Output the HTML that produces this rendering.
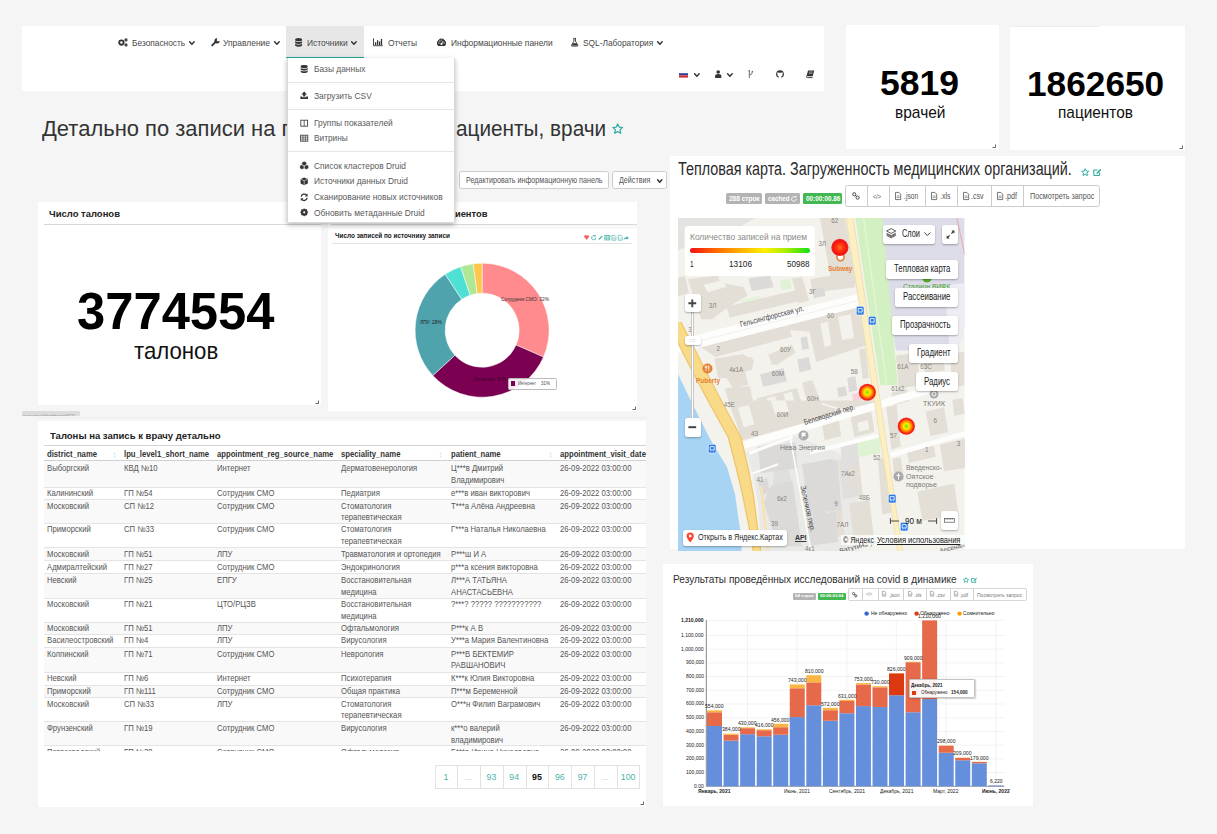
<!DOCTYPE html>
<html lang="ru"><head><meta charset="utf-8"><title>Детально по записи</title>
<style>
html,body{margin:0;padding:0}
body{width:1217px;height:834px;overflow:hidden;background:#f5f5f5;position:relative;font-family:"Liberation Sans",sans-serif;color:#333}
.t{position:absolute;white-space:nowrap;line-height:1;transform-origin:0 0;margin:0;padding:0;font-weight:400}
b.t,.t.b{font-weight:700}
.r{position:absolute;box-sizing:border-box;overflow:visible}
h1,h2,h3,p,nav,header,section,ul,li,table{margin:0;padding:0;font-weight:400;font-size:inherit}
.btn{border:1px solid #ccc;border-radius:2.5px}
.card{background:#fff}
.shadow{box-shadow:0 1px 2px rgba(0,0,0,.28)}
</style></head>
<body>
<header>
<div class="r hdr" style="left:22px;top:26px;width:802px;height:65px;background:#fff;"></div>
<div class="r" style="left:286px;top:26px;width:77.5px;height:31.5px;background:#e7e7e7;border-bottom:1.5px solid #1fa698;"></div>
<nav>
<svg class="r" style="left:118px;top:38px;" width="10" height="8.5" viewBox="0 0 10 8.5"><circle cx="3.4" cy="4.6" r="2.2" fill="none" stroke="#333" stroke-width="1.9"/><circle cx="8" cy="1.9" r="1" fill="none" stroke="#333" stroke-width="1.1"/><circle cx="8" cy="6.9" r="1" fill="none" stroke="#333" stroke-width="1.1"/></svg>
<span class="t" style="left:132px;top:37.5px;font-size:9.8px;color:#484848;transform:scaleX(0.851);">Безопасность</span>
<svg class="r" style="left:189.3px;top:41.3px;" width="5.8" height="4.5" viewBox="0 0 5.8 4.5"><path d="M0.6 0.8 L2.9 3.2 L5.2 0.8" fill="none" stroke="#333" stroke-width="1.45" stroke-linecap="round" stroke-linejoin="round"/></svg>
<svg class="r" style="left:210.5px;top:38px;" width="9" height="8.5" viewBox="0 0 9 8.5"><path d="M1.2 7.4 L5.2 3.4" stroke="#333" stroke-width="1.9" stroke-linecap="round"/><path d="M6.3 0.4 A2.6 2.6 0 1 0 8.6 2.8 L6.9 3.6 L5.6 2.4 Z" fill="#333"/></svg>
<span class="t" style="left:223px;top:37.5px;font-size:9.8px;color:#484848;transform:scaleX(0.8627);">Управление</span>
<svg class="r" style="left:273.6px;top:41.3px;" width="5.8" height="4.5" viewBox="0 0 5.8 4.5"><path d="M0.6 0.8 L2.9 3.2 L5.2 0.8" fill="none" stroke="#333" stroke-width="1.45" stroke-linecap="round" stroke-linejoin="round"/></svg>
<svg class="r" style="left:295px;top:37.7px;" width="7.4" height="9.2" viewBox="0 0 7.4 9.2"><g transform="scale(1,1.08)"><ellipse cx="3.6" cy="1.6" rx="3.5" ry="1.5" fill="#333"/><path d="M0.1 2.5 v1.5 a3.5 1.5 0 0 0 7 0 v-1.5 a3.5 1.3 0 0 1 -7 0z M0.1 4.9 v1.7 a3.5 1.5 0 0 0 7 0 v-1.7 a3.5 1.3 0 0 1 -7 0z" fill="#333"/></g></svg>
<span class="t" style="left:307px;top:37.5px;font-size:9.8px;color:#484848;transform:scaleX(0.8581);">Источники</span>
<svg class="r" style="left:351.2px;top:41.3px;" width="5.8" height="4.5" viewBox="0 0 5.8 4.5"><path d="M0.6 0.8 L2.9 3.2 L5.2 0.8" fill="none" stroke="#333" stroke-width="1.45" stroke-linecap="round" stroke-linejoin="round"/></svg>
<svg class="r" style="left:373px;top:38px;" width="10" height="8.5" viewBox="0 0 10 8.5"><path d="M0.5 0.3 V7.7 H9.7" fill="none" stroke="#333" stroke-width="0.9"/><path d="M2.6 7 V4.2 M4.6 7 V2.2 M6.6 7 V3.4 M8.5 7 V1" stroke="#333" stroke-width="1.3"/></svg>
<span class="t" style="left:388px;top:37.5px;font-size:9.8px;color:#484848;transform:scaleX(0.8561);">Отчеты</span>
<svg class="r" style="left:436.5px;top:38px;" width="9" height="8.5" viewBox="0 0 9 8.5"><path d="M1.1 8 A4.4 4.4 0 1 1 7.9 8 Z" fill="#333"/><circle cx="4.5" cy="5.9" r="1.05" fill="#fff"/><path d="M4.5 5.9 L6.2 3" stroke="#fff" stroke-width="0.8"/><circle cx="1.9" cy="4.9" r="0.6" fill="#fff"/><circle cx="2.9" cy="2.9" r="0.6" fill="#fff"/><circle cx="7.1" cy="4.9" r="0.6" fill="#fff"/><circle cx="4.5" cy="2.1" r="0.5" fill="#fff"/></svg>
<span class="t" style="left:450.7px;top:37.5px;font-size:9.8px;color:#484848;transform:scaleX(0.857);">Информационные панели</span>
<svg class="r" style="left:570.5px;top:38px;" width="7.4" height="8.5" viewBox="0 0 7.4 8.5"><path d="M2.5 0.4 h2.4 M2.9 0.5 v2.7 L0.5 7.3 q-0.3 0.8 0.6 0.8 h5.2 q0.9 0 0.6 -0.8 L4.5 3.2 v-2.7" fill="none" stroke="#333" stroke-width="0.9"/><path d="M2 5.2 h3.4 l1.2 2.4 h-5.8z" fill="#333"/></svg>
<span class="t" style="left:583px;top:37.5px;font-size:9.8px;color:#484848;transform:scaleX(0.8502);">SQL-Лаборатория</span>
<svg class="r" style="left:657.4px;top:41.3px;" width="5.8" height="4.5" viewBox="0 0 5.8 4.5"><path d="M0.6 0.8 L2.9 3.2 L5.2 0.8" fill="none" stroke="#333" stroke-width="1.45" stroke-linecap="round" stroke-linejoin="round"/></svg>
</nav>
<svg class="r" style="left:678.5px;top:71px;" width="9" height="6.6" viewBox="0 0 9 6.6"><rect width="9" height="2.2" fill="#fbfbfb" stroke="#e8e8e8" stroke-width="0.3"/><rect y="2.2" width="9" height="2.2" fill="#2a3f9d"/><rect y="4.4" width="9" height="2.2" fill="#d52b34"/></svg>
<svg class="r" style="left:693.7px;top:73px;" width="5.8" height="4.5" viewBox="0 0 5.8 4.5"><path d="M0.6 0.8 L2.9 3.2 L5.2 0.8" fill="none" stroke="#333" stroke-width="1.45" stroke-linecap="round" stroke-linejoin="round"/></svg>
<svg class="r" style="left:715px;top:70px;" width="6.4" height="8" viewBox="0 0 6.4 8"><circle cx="3.2" cy="2" r="1.8" fill="#333"/><path d="M0.1 7.9 V6 q0 -2 3.1 -2 q3.1 0 3.1 2 V7.9z" fill="#333"/></svg>
<svg class="r" style="left:727.4px;top:73px;" width="5.8" height="4.5" viewBox="0 0 5.8 4.5"><path d="M0.6 0.8 L2.9 3.2 L5.2 0.8" fill="none" stroke="#333" stroke-width="1.45" stroke-linecap="round" stroke-linejoin="round"/></svg>
<svg class="r" style="left:748.4px;top:70.2px;" width="6" height="8.2" viewBox="0 0 6 8.2"><path d="M1.3 0.3 V8 M1.3 5.2 Q4.4 5 4.4 1.6" fill="none" stroke="#6e6e6e" stroke-width="1"/><circle cx="1.3" cy="0.9" r="0.8" fill="#6e6e6e"/><circle cx="4.4" cy="1.5" r="0.8" fill="#6e6e6e"/></svg>
<svg class="r" style="left:776px;top:70px;" width="8" height="8.2" viewBox="0 0 8 8.2"><path d="M4 0.3 A3.8 3.8 0 0 0 2.7 7.7 V6.3 Q1.3 6.2 1.6 4.9 Q0.8 3.6 1.6 2.2 Q2.7 2.2 3 2.7 h2 Q5.3 2.2 6.4 2.2 Q7.2 3.6 6.4 4.9 Q6.7 6.2 5.3 6.3 V7.7 A3.8 3.8 0 0 0 4 0.3z" fill="#333"/></svg>
<svg class="r" style="left:806px;top:70px;" width="8.6" height="8" viewBox="0 0 8.6 8"><path d="M2 0.4 h6.2 l-1.5 5.8 h-6.2z" fill="#333"/><path d="M0.5 6.2 q-0.3 1.4 1 1.4 h5.2" fill="none" stroke="#333" stroke-width="0.9"/><path d="M3 2 h3.6 M2.7 3.3 h3.6" stroke="#fff" stroke-width="0.5"/></svg>
</header>
<h1 class="ttl">
<span class="t" style="left:42px;top:118.07px;font-size:22.6px;color:#333;transform:scaleX(0.972);">Детально по записи на приём к врачу: п</span>
<span class="t" style="left:455.8px;top:118.07px;font-size:22.6px;color:#333;transform:scaleX(0.9193);">ациенты, врачи</span>
</h1>
<svg class="r" style="left:611.5px;top:123.4px;" width="11.4" height="11.4" viewBox="0 0 11.4 11.4"><path d="M5.7 0.9 L7.15 4.1 L10.6 4.45 L8 6.8 L8.75 10.2 L5.7 8.45 L2.65 10.2 L3.4 6.8 L0.8 4.45 L4.25 4.1 Z" fill="none" stroke="#1fa698" stroke-width="1.1" stroke-linejoin="round"/></svg>
<div class="r btn" style="left:459px;top:171px;width:150.3px;height:18px;background:#fff;"></div>
<span class="t" style="left:466px;top:176.19px;font-size:8.4px;color:#555;transform:scaleX(0.8551);">Редактировать информационную панель</span>
<div class="r btn" style="left:612px;top:171px;width:54.5px;height:18px;background:#fff;"></div>
<span class="t" style="left:619px;top:176.19px;font-size:8.4px;color:#555;transform:scaleX(0.8559);">Действия</span>
<svg class="r" style="left:656.7px;top:178.6px;" width="5.4" height="4.6" viewBox="0 0 5.4 4.6"><path d="M0.6 0.8 L2.7 3.3 L4.8 0.8" fill="none" stroke="#333" stroke-width="1.45" stroke-linecap="round" stroke-linejoin="round"/></svg>
<div class="r" style="left:845.5px;top:25px;width:153px;height:124px;background:#fff;"></div>
<span class="t" style="left:880.3px;top:65.74px;font-size:34.8px;font-weight:700;color:#000;transform:scaleX(1.0204);">5819</span>
<span class="t" style="left:894.75px;top:104.85px;font-size:16.6px;color:#111;transform:scaleX(0.9339);">врачей</span>
<div class="r" style="left:1010px;top:26px;width:175px;height:123.8px;background:#fff;"></div>
<div class="r" style="left:1008.5px;top:26px;width:90px;height:1.2px;background:#ededed;"></div>
<span class="t" style="left:1027.4px;top:66.54px;font-size:34.8px;font-weight:700;color:#000;transform:scaleX(1.0127);">1862650</span>
<span class="t" style="left:1057.7px;top:104.85px;font-size:16.6px;color:#111;transform:scaleX(0.9274);">пациентов</span>
<svg class="r" style="left:992px;top:143.5px;" width="4" height="4" viewBox="0 0 4 4"><path d="M3.5 0.5 V3.5 H0.5" fill="none" stroke="#555" stroke-width="0.9"/></svg>
<svg class="r" style="left:1179px;top:144.5px;" width="4" height="4" viewBox="0 0 4 4"><path d="M3.5 0.5 V3.5 H0.5" fill="none" stroke="#555" stroke-width="0.9"/></svg>
<section>
<div class="r" style="left:38px;top:201.6px;width:282.7px;height:203px;background:#fff;"></div>
<span class="t" style="left:49px;top:209.3px;font-size:9.8px;font-weight:700;color:#222;transform:scaleX(0.9669);">Число талонов</span>
<div class="r" style="left:43.5px;top:224.2px;width:277.2px;height:1.2px;background:#d8d8d8;"></div>
<span class="t" style="left:76.95px;top:284.98px;font-size:52px;font-weight:700;color:#000;transform:scaleX(0.9756);">3774554</span>
<span class="t" style="left:133.85px;top:340.16px;font-size:23.2px;color:#111;transform:scaleX(0.9578);">талонов</span>
<svg class="r" style="left:315px;top:399.5px;" width="4" height="4" viewBox="0 0 4 4"><path d="M3.5 0.5 V3.5 H0.5" fill="none" stroke="#555" stroke-width="0.9"/></svg>
</section>
<div class="r" style="left:22px;top:410.6px;width:58.3px;height:5.5px;background:#dedcda;overflow:hidden;border-radius:0 1.5px 0 0">
<span class="t" style="left:1px;top:3.56px;font-size:5.6px;color:#909090;transform:scaleX(0.8837);">superset/dashboard/12/</span>
</div>
<div class="r" style="left:37.5px;top:417.2px;width:608.7px;height:1.4px;background:#f0f0f0;"></div>
<section>
<div class="r" style="left:327.5px;top:201.6px;width:309.8px;height:209.4px;background:#fff;"></div>
<span class="t" style="left:351.57px;top:209.3px;font-size:9.8px;font-weight:700;color:#222;transform:scaleX(0.9538);">Источники записи пациентов</span>
<div class="r" style="left:331px;top:224.2px;width:306.3px;height:1.2px;background:#d8d8d8;"></div>
<div class="r" style="left:327.5px;top:225.4px;width:309.8px;height:3.2px;background:#f8f8f8;"></div>
<span class="t" style="left:335px;top:232.37px;font-size:7.6px;font-weight:700;color:#222;transform:scaleX(0.8436);">Число записей по источнику записи</span>
<div class="r" style="left:332px;top:242.6px;width:300px;height:0.9px;background:#e2e2e2;"></div>
<svg class="r" style="left:582px;top:234.6px;" width="48.6" height="5.6" viewBox="0 0 50.5 6.2"><path d="M0.3 1.6 L1.6 0.3 H5.2 L6.5 1.6 L3.4 5.6 Z" fill="#f4656a"/><path d="M13.6 3 A2.3 2.3 0 1 1 12.6 1.1" fill="none" stroke="#3fb0a4" stroke-width="0.9"/><path d="M11.9 0 L14 0.4 L12.7 2.1z" fill="#3fb0a4"/><path d="M16.6 5.4 L17 4 L20.3 0.7 L21.3 1.7 L18 5 Z" fill="#3fb0a4"/><rect x="23.6" y="0.5" width="5.6" height="5" fill="none" stroke="#3fb0a4" stroke-width="0.8"/><path d="M23.6 2.2 h5.6 M23.6 3.8 h5.6 M25.5 0.5 v5 M27.4 0.5 v5" stroke="#3fb0a4" stroke-width="0.5"/><path d="M31.5 0.4 h3 l1.4 1.4 v4 h-4.4z" fill="none" stroke="#3fb0a4" stroke-width="0.7"/><path d="M32.4 3 h2.4 M32.4 4.3 h2.4" stroke="#3fb0a4" stroke-width="0.5"/><path d="M38.5 0.4 h3 l1.4 1.4 v4 h-4.4z" fill="none" stroke="#3fb0a4" stroke-width="0.7"/><path d="M39.4 3.6 h2.4" stroke="#3fb0a4" stroke-width="0.5"/><path d="M44.5 5.6 Q44.6 2.6 47.6 2.6 V1 L50.2 3.2 L47.6 5.4 V3.9 Q45.6 3.8 44.5 5.6z" fill="#3fb0a4"/></svg>
<svg class="r" style="left:400px;top:250px;" width="170" height="160" viewBox="0 0 170 160"><path d="M82.1 13.2 A67 67 0 0 1 143.5 107.02 L116.01 95.01 A37 37 0 0 0 82.1 43.2 Z" fill="#ff8b8e" stroke="#fff" stroke-width="0.5"/><path d="M143.5 107.02 A67 67 0 0 1 32.78 125.55 L54.86 105.24 A37 37 0 0 0 116.01 95.01 Z" fill="#7b0051" stroke="#fff" stroke-width="0.5"/><path d="M32.78 125.55 A67 67 0 0 1 45.22 24.27 L61.73 49.31 A37 37 0 0 0 54.86 105.24 Z" fill="#4ea3ad" stroke="#fff" stroke-width="0.5"/><path d="M45.22 24.27 A67 67 0 0 1 60.62 16.74 L70.24 45.15 A37 37 0 0 0 61.73 49.31 Z" fill="#4fe0d5" stroke="#fff" stroke-width="0.5"/><path d="M60.62 16.74 A67 67 0 0 1 73.24 13.79 L77.21 43.53 A37 37 0 0 0 70.24 45.15 Z" fill="#aee896" stroke="#fff" stroke-width="0.5"/><path d="M73.24 13.79 A67 67 0 0 1 82.1 13.2 L82.1 43.2 A37 37 0 0 0 77.21 43.53 Z" fill="#fdc64c" stroke="#fff" stroke-width="0.5"/></svg>
<span class="t" style="left:501px;top:297.4px;font-size:5.2px;color:#333;transform:scaleX(0.9217);">Сотрудник СМО: 32%</span>
<span class="t" style="left:420px;top:320.1px;font-size:5.2px;color:#222;transform:scaleX(0.9181);">ЛПУ: 28%</span>
<span class="t" style="left:473.7px;top:376.6px;font-size:5.2px;color:#3a0028;transform:scaleX(0.8976);">Интернет: 31%</span>
<div class="r" style="left:507.5px;top:377.5px;width:49.7px;height:12.2px;background:rgba(255,255,255,.92);border:0.8px solid #bbb;border-radius:1.5px;"></div>
<div class="r" style="left:510.8px;top:381.2px;width:4.4px;height:4.4px;background:#7b0051;"></div>
<span class="t" style="left:518px;top:381.84px;font-size:4.8px;color:#555;transform:scaleX(0.8594);">Интернет</span>
<span class="t" style="left:541px;top:381.84px;font-size:4.8px;color:#444;transform:scaleX(0.9368);">31%</span>
<svg class="r" style="left:631.5px;top:405.5px;" width="4" height="4" viewBox="0 0 4 4"><path d="M3.5 0.5 V3.5 H0.5" fill="none" stroke="#555" stroke-width="0.9"/></svg>
</section>
<section>
<div class="r" style="left:37.5px;top:421px;width:608.7px;height:385.5px;background:#fff;"></div>
<span class="t" style="left:50px;top:430.5px;font-size:9.8px;font-weight:700;color:#222;transform:scaleX(0.9723);">Талоны на запись к врачу детально</span>
<div class="r" style="left:44px;top:444.6px;width:602.2px;height:1.1px;background:#d4d4d4;"></div>
<div class="r" style="left:0;top:0;width:646.2px;height:751px;overflow:hidden">
<span class="t" style="left:47px;top:450px;font-size:8.5px;font-weight:700;color:#333;transform:scaleX(0.905);">district_name</span>
<span class="t" style="left:123.8px;top:450px;font-size:8.5px;font-weight:700;color:#333;transform:scaleX(0.905);">lpu_level1_short_name</span>
<span class="t" style="left:216.5px;top:450px;font-size:8.5px;font-weight:700;color:#333;transform:scaleX(0.905);">appointment_reg_source_name</span>
<span class="t" style="left:340.8px;top:450px;font-size:8.5px;font-weight:700;color:#333;transform:scaleX(0.905);">speciality_name</span>
<span class="t" style="left:451.3px;top:450px;font-size:8.5px;font-weight:700;color:#333;transform:scaleX(0.905);">patient_name</span>
<span class="t" style="left:560px;top:450px;font-size:8.5px;font-weight:700;color:#333;transform:scaleX(0.905);">appointment_visit_date</span>
<svg class="r" style="left:112.5px;top:452.2px;" width="3" height="6" viewBox="0 0 3 6"><path d="M1.5 0.3 L2.7 2.2 H0.3Z M1.5 5.7 L2.7 3.8 H0.3Z" fill="#ddd"/></svg>
<svg class="r" style="left:439px;top:452.2px;" width="3" height="6" viewBox="0 0 3 6"><path d="M1.5 0.3 L2.7 2.2 H0.3Z M1.5 5.7 L2.7 3.8 H0.3Z" fill="#ddd"/></svg>
<svg class="r" style="left:548.8px;top:452.2px;" width="3" height="6" viewBox="0 0 3 6"><path d="M1.5 0.3 L2.7 2.2 H0.3Z M1.5 5.7 L2.7 3.8 H0.3Z" fill="#ddd"/></svg>
<div class="r" style="left:44px;top:460.2px;width:602.2px;height:1px;background:#d0d0d0;"></div>
<div class="r" style="left:44px;top:461.2px;width:602.2px;height:25.8px;background:#f9f9f9;"></div>
<span class="t" style="left:47px;top:464.1px;font-size:8.5px;color:#555;transform:scaleX(0.905);">Выборгский</span>
<span class="t" style="left:123.8px;top:464.1px;font-size:8.5px;color:#555;transform:scaleX(0.905);">КВД №10</span>
<span class="t" style="left:216.5px;top:464.1px;font-size:8.5px;color:#555;transform:scaleX(0.905);">Интернет</span>
<span class="t" style="left:340.8px;top:464.1px;font-size:8.5px;color:#555;transform:scaleX(0.905);">Дерматовенерология</span>
<span class="t" style="left:451.3px;top:464.1px;font-size:8.5px;color:#555;transform:scaleX(0.905);">Ц***в Дмитрий</span>
<span class="t" style="left:451.3px;top:475.85px;font-size:8.5px;color:#555;transform:scaleX(0.905);">Владимирович</span>
<span class="t" style="left:560px;top:464.1px;font-size:8.5px;color:#555;transform:scaleX(0.905);">26-09-2022 03:00:00</span>
<div class="r" style="left:44px;top:486.5px;width:602.2px;height:1px;background:#e4e4e4;"></div>
<span class="t" style="left:47px;top:488.8px;font-size:8.5px;color:#555;transform:scaleX(0.905);">Калининский</span>
<span class="t" style="left:123.8px;top:488.8px;font-size:8.5px;color:#555;transform:scaleX(0.905);">ГП №54</span>
<span class="t" style="left:216.5px;top:488.8px;font-size:8.5px;color:#555;transform:scaleX(0.905);">Сотрудник СМО</span>
<span class="t" style="left:340.8px;top:488.8px;font-size:8.5px;color:#555;transform:scaleX(0.905);">Педиатрия</span>
<span class="t" style="left:451.3px;top:488.8px;font-size:8.5px;color:#555;transform:scaleX(0.905);">е***в иван викторович</span>
<span class="t" style="left:560px;top:488.8px;font-size:8.5px;color:#555;transform:scaleX(0.905);">26-09-2022 03:00:00</span>
<div class="r" style="left:44px;top:499px;width:602.2px;height:1px;background:#e4e4e4;"></div>
<div class="r" style="left:44px;top:500px;width:602.2px;height:23.8px;background:#f9f9f9;"></div>
<span class="t" style="left:47px;top:501.6px;font-size:8.5px;color:#555;transform:scaleX(0.905);">Московский</span>
<span class="t" style="left:123.8px;top:501.6px;font-size:8.5px;color:#555;transform:scaleX(0.905);">СП №12</span>
<span class="t" style="left:216.5px;top:501.6px;font-size:8.5px;color:#555;transform:scaleX(0.905);">Сотрудник СМО</span>
<span class="t" style="left:340.8px;top:501.6px;font-size:8.5px;color:#555;transform:scaleX(0.905);">Стоматология</span>
<span class="t" style="left:340.8px;top:513.35px;font-size:8.5px;color:#555;transform:scaleX(0.905);">терапевтическая</span>
<span class="t" style="left:451.3px;top:501.6px;font-size:8.5px;color:#555;transform:scaleX(0.905);">Т***а Алёна Андреевна</span>
<span class="t" style="left:560px;top:501.6px;font-size:8.5px;color:#555;transform:scaleX(0.905);">26-09-2022 03:00:00</span>
<div class="r" style="left:44px;top:523.3px;width:602.2px;height:1px;background:#e4e4e4;"></div>
<span class="t" style="left:47px;top:525.3px;font-size:8.5px;color:#555;transform:scaleX(0.905);">Приморский</span>
<span class="t" style="left:123.8px;top:525.3px;font-size:8.5px;color:#555;transform:scaleX(0.905);">СП №33</span>
<span class="t" style="left:216.5px;top:525.3px;font-size:8.5px;color:#555;transform:scaleX(0.905);">Сотрудник СМО</span>
<span class="t" style="left:340.8px;top:525.3px;font-size:8.5px;color:#555;transform:scaleX(0.905);">Стоматология</span>
<span class="t" style="left:340.8px;top:537.05px;font-size:8.5px;color:#555;transform:scaleX(0.905);">терапевтическая</span>
<span class="t" style="left:451.3px;top:525.3px;font-size:8.5px;color:#555;transform:scaleX(0.905);">Г***а Наталья Николаевна</span>
<span class="t" style="left:560px;top:525.3px;font-size:8.5px;color:#555;transform:scaleX(0.905);">26-09-2022 03:00:00</span>
<div class="r" style="left:44px;top:547px;width:602.2px;height:1px;background:#e4e4e4;"></div>
<div class="r" style="left:44px;top:548px;width:602.2px;height:12.5px;background:#f9f9f9;"></div>
<span class="t" style="left:47px;top:549.6px;font-size:8.5px;color:#555;transform:scaleX(0.905);">Московский</span>
<span class="t" style="left:123.8px;top:549.6px;font-size:8.5px;color:#555;transform:scaleX(0.905);">ГП №51</span>
<span class="t" style="left:216.5px;top:549.6px;font-size:8.5px;color:#555;transform:scaleX(0.905);">ЛПУ</span>
<span class="t" style="left:340.8px;top:549.6px;font-size:8.5px;color:#555;transform:scaleX(0.905);">Травматология и ортопедия</span>
<span class="t" style="left:451.3px;top:549.6px;font-size:8.5px;color:#555;transform:scaleX(0.905);">Р***ш И А</span>
<span class="t" style="left:560px;top:549.6px;font-size:8.5px;color:#555;transform:scaleX(0.905);">26-09-2022 03:00:00</span>
<div class="r" style="left:44px;top:560px;width:602.2px;height:1px;background:#e4e4e4;"></div>
<span class="t" style="left:47px;top:562.8px;font-size:8.5px;color:#555;transform:scaleX(0.905);">Адмиралтейский</span>
<span class="t" style="left:123.8px;top:562.8px;font-size:8.5px;color:#555;transform:scaleX(0.905);">ГП №27</span>
<span class="t" style="left:216.5px;top:562.8px;font-size:8.5px;color:#555;transform:scaleX(0.905);">Сотрудник СМО</span>
<span class="t" style="left:340.8px;top:562.8px;font-size:8.5px;color:#555;transform:scaleX(0.905);">Эндокринология</span>
<span class="t" style="left:451.3px;top:562.8px;font-size:8.5px;color:#555;transform:scaleX(0.905);">р***а ксения викторовна</span>
<span class="t" style="left:560px;top:562.8px;font-size:8.5px;color:#555;transform:scaleX(0.905);">26-09-2022 03:00:00</span>
<div class="r" style="left:44px;top:573.3px;width:602.2px;height:1px;background:#e4e4e4;"></div>
<div class="r" style="left:44px;top:574.3px;width:602.2px;height:23.7px;background:#f9f9f9;"></div>
<span class="t" style="left:47px;top:575.8px;font-size:8.5px;color:#555;transform:scaleX(0.905);">Невский</span>
<span class="t" style="left:123.8px;top:575.8px;font-size:8.5px;color:#555;transform:scaleX(0.905);">ГП №25</span>
<span class="t" style="left:216.5px;top:575.8px;font-size:8.5px;color:#555;transform:scaleX(0.905);">ЕПГУ</span>
<span class="t" style="left:340.8px;top:575.8px;font-size:8.5px;color:#555;transform:scaleX(0.905);">Восстановительная</span>
<span class="t" style="left:340.8px;top:587.55px;font-size:8.5px;color:#555;transform:scaleX(0.905);">медицина</span>
<span class="t" style="left:451.3px;top:575.8px;font-size:8.5px;color:#555;transform:scaleX(0.905);">Л***А ТАТЬЯНА</span>
<span class="t" style="left:451.3px;top:587.55px;font-size:8.5px;color:#555;transform:scaleX(0.905);">АНАСТАСЬЕВНА</span>
<span class="t" style="left:560px;top:575.8px;font-size:8.5px;color:#555;transform:scaleX(0.905);">26-09-2022 03:00:00</span>
<div class="r" style="left:44px;top:597.5px;width:602.2px;height:1px;background:#e4e4e4;"></div>
<span class="t" style="left:47px;top:600.1px;font-size:8.5px;color:#555;transform:scaleX(0.905);">Московский</span>
<span class="t" style="left:123.8px;top:600.1px;font-size:8.5px;color:#555;transform:scaleX(0.905);">ГП №21</span>
<span class="t" style="left:216.5px;top:600.1px;font-size:8.5px;color:#555;transform:scaleX(0.905);">ЦТО/РЦЗВ</span>
<span class="t" style="left:340.8px;top:600.1px;font-size:8.5px;color:#555;transform:scaleX(0.905);">Восстановительная</span>
<span class="t" style="left:340.8px;top:611.85px;font-size:8.5px;color:#555;transform:scaleX(0.905);">медицина</span>
<span class="t" style="left:451.3px;top:600.1px;font-size:8.5px;color:#555;transform:scaleX(0.905);">?***? ????? ???????????</span>
<span class="t" style="left:560px;top:600.1px;font-size:8.5px;color:#555;transform:scaleX(0.905);">26-09-2022 03:00:00</span>
<div class="r" style="left:44px;top:622px;width:602.2px;height:1px;background:#e4e4e4;"></div>
<div class="r" style="left:44px;top:623px;width:602.2px;height:11.5px;background:#f9f9f9;"></div>
<span class="t" style="left:47px;top:623.8px;font-size:8.5px;color:#555;transform:scaleX(0.905);">Московский</span>
<span class="t" style="left:123.8px;top:623.8px;font-size:8.5px;color:#555;transform:scaleX(0.905);">ГП №51</span>
<span class="t" style="left:216.5px;top:623.8px;font-size:8.5px;color:#555;transform:scaleX(0.905);">ЛПУ</span>
<span class="t" style="left:340.8px;top:623.8px;font-size:8.5px;color:#555;transform:scaleX(0.905);">Офтальмология</span>
<span class="t" style="left:451.3px;top:623.8px;font-size:8.5px;color:#555;transform:scaleX(0.905);">Р***к А В</span>
<span class="t" style="left:560px;top:623.8px;font-size:8.5px;color:#555;transform:scaleX(0.905);">26-09-2022 03:00:00</span>
<div class="r" style="left:44px;top:634px;width:602.2px;height:1px;background:#e4e4e4;"></div>
<span class="t" style="left:47px;top:636.3px;font-size:8.5px;color:#555;transform:scaleX(0.905);">Василеостровский</span>
<span class="t" style="left:123.8px;top:636.3px;font-size:8.5px;color:#555;transform:scaleX(0.905);">ГП №4</span>
<span class="t" style="left:216.5px;top:636.3px;font-size:8.5px;color:#555;transform:scaleX(0.905);">ЛПУ</span>
<span class="t" style="left:340.8px;top:636.3px;font-size:8.5px;color:#555;transform:scaleX(0.905);">Вирусология</span>
<span class="t" style="left:451.3px;top:636.3px;font-size:8.5px;color:#555;transform:scaleX(0.905);">У***а Мария Валентиновна</span>
<span class="t" style="left:560px;top:636.3px;font-size:8.5px;color:#555;transform:scaleX(0.905);">26-09-2022 03:00:00</span>
<div class="r" style="left:44px;top:647px;width:602.2px;height:1px;background:#e4e4e4;"></div>
<div class="r" style="left:44px;top:648px;width:602.2px;height:24px;background:#f9f9f9;"></div>
<span class="t" style="left:47px;top:649.6px;font-size:8.5px;color:#555;transform:scaleX(0.905);">Колпинский</span>
<span class="t" style="left:123.8px;top:649.6px;font-size:8.5px;color:#555;transform:scaleX(0.905);">ГП №71</span>
<span class="t" style="left:216.5px;top:649.6px;font-size:8.5px;color:#555;transform:scaleX(0.905);">Сотрудник СМО</span>
<span class="t" style="left:340.8px;top:649.6px;font-size:8.5px;color:#555;transform:scaleX(0.905);">Неврология</span>
<span class="t" style="left:451.3px;top:649.6px;font-size:8.5px;color:#555;transform:scaleX(0.905);">Р***В БЕКТЕМИР</span>
<span class="t" style="left:451.3px;top:661.35px;font-size:8.5px;color:#555;transform:scaleX(0.905);">РАВШАНОВИЧ</span>
<span class="t" style="left:560px;top:649.6px;font-size:8.5px;color:#555;transform:scaleX(0.905);">26-09-2022 03:00:00</span>
<div class="r" style="left:44px;top:671.5px;width:602.2px;height:1px;background:#e4e4e4;"></div>
<span class="t" style="left:47px;top:673.8px;font-size:8.5px;color:#555;transform:scaleX(0.905);">Невский</span>
<span class="t" style="left:123.8px;top:673.8px;font-size:8.5px;color:#555;transform:scaleX(0.905);">ГП №6</span>
<span class="t" style="left:216.5px;top:673.8px;font-size:8.5px;color:#555;transform:scaleX(0.905);">Интернет</span>
<span class="t" style="left:340.8px;top:673.8px;font-size:8.5px;color:#555;transform:scaleX(0.905);">Психотерапия</span>
<span class="t" style="left:451.3px;top:673.8px;font-size:8.5px;color:#555;transform:scaleX(0.905);">К***к Юлия Викторовна</span>
<span class="t" style="left:560px;top:673.8px;font-size:8.5px;color:#555;transform:scaleX(0.905);">26-09-2022 03:00:00</span>
<div class="r" style="left:44px;top:684.5px;width:602.2px;height:1px;background:#e4e4e4;"></div>
<div class="r" style="left:44px;top:685.5px;width:602.2px;height:12px;background:#f9f9f9;"></div>
<span class="t" style="left:47px;top:687.1px;font-size:8.5px;color:#555;transform:scaleX(0.905);">Приморский</span>
<span class="t" style="left:123.8px;top:687.1px;font-size:8.5px;color:#555;transform:scaleX(0.905);">ГП №111</span>
<span class="t" style="left:216.5px;top:687.1px;font-size:8.5px;color:#555;transform:scaleX(0.905);">Сотрудник СМО</span>
<span class="t" style="left:340.8px;top:687.1px;font-size:8.5px;color:#555;transform:scaleX(0.905);">Общая практика</span>
<span class="t" style="left:451.3px;top:687.1px;font-size:8.5px;color:#555;transform:scaleX(0.905);">П***м Беременной</span>
<span class="t" style="left:560px;top:687.1px;font-size:8.5px;color:#555;transform:scaleX(0.905);">26-09-2022 03:00:00</span>
<div class="r" style="left:44px;top:697px;width:602.2px;height:1px;background:#e4e4e4;"></div>
<span class="t" style="left:47px;top:699.6px;font-size:8.5px;color:#555;transform:scaleX(0.905);">Московский</span>
<span class="t" style="left:123.8px;top:699.6px;font-size:8.5px;color:#555;transform:scaleX(0.905);">СП №33</span>
<span class="t" style="left:216.5px;top:699.6px;font-size:8.5px;color:#555;transform:scaleX(0.905);">ЛПУ</span>
<span class="t" style="left:340.8px;top:699.6px;font-size:8.5px;color:#555;transform:scaleX(0.905);">Стоматология</span>
<span class="t" style="left:340.8px;top:711.35px;font-size:8.5px;color:#555;transform:scaleX(0.905);">терапевтическая</span>
<span class="t" style="left:451.3px;top:699.6px;font-size:8.5px;color:#555;transform:scaleX(0.905);">О***н Филип Ваграмович</span>
<span class="t" style="left:560px;top:699.6px;font-size:8.5px;color:#555;transform:scaleX(0.905);">26-09-2022 03:00:00</span>
<div class="r" style="left:44px;top:721.3px;width:602.2px;height:1px;background:#e4e4e4;"></div>
<div class="r" style="left:44px;top:722.3px;width:602.2px;height:23.2px;background:#f9f9f9;"></div>
<span class="t" style="left:47px;top:723.8px;font-size:8.5px;color:#555;transform:scaleX(0.905);">Фрунзенский</span>
<span class="t" style="left:123.8px;top:723.8px;font-size:8.5px;color:#555;transform:scaleX(0.905);">ГП №19</span>
<span class="t" style="left:216.5px;top:723.8px;font-size:8.5px;color:#555;transform:scaleX(0.905);">Сотрудник СМО</span>
<span class="t" style="left:340.8px;top:723.8px;font-size:8.5px;color:#555;transform:scaleX(0.905);">Вирусология</span>
<span class="t" style="left:451.3px;top:723.8px;font-size:8.5px;color:#555;transform:scaleX(0.905);">к***о валерий</span>
<span class="t" style="left:451.3px;top:735.55px;font-size:8.5px;color:#555;transform:scaleX(0.905);">владимирович</span>
<span class="t" style="left:560px;top:723.8px;font-size:8.5px;color:#555;transform:scaleX(0.905);">26-09-2022 03:00:00</span>
<div class="r" style="left:44px;top:745px;width:602.2px;height:1px;background:#e4e4e4;"></div>
<span class="t" style="left:47px;top:748.1px;font-size:8.5px;color:#555;transform:scaleX(0.905);">Петроградский</span>
<span class="t" style="left:123.8px;top:748.1px;font-size:8.5px;color:#555;transform:scaleX(0.905);">ГП №30</span>
<span class="t" style="left:216.5px;top:748.1px;font-size:8.5px;color:#555;transform:scaleX(0.905);">Сотрудник СМО</span>
<span class="t" style="left:340.8px;top:748.1px;font-size:8.5px;color:#555;transform:scaleX(0.905);">Офтальмология</span>
<span class="t" style="left:451.3px;top:748.1px;font-size:8.5px;color:#555;transform:scaleX(0.905);">Б***а Ирина Николаевна</span>
<span class="t" style="left:560px;top:748.1px;font-size:8.5px;color:#555;transform:scaleX(0.905);">26-09-2022 03:00:00</span>
<div class="r" style="left:44px;top:769.5px;width:602.2px;height:1px;background:#e4e4e4;"></div>
</div>
<div class="r" style="left:434.5px;top:765px;width:205px;height:23.8px;background:#fff;border:1px solid #e2e2e2;"></div>
<span class="t" style="left:443.44px;top:773.05px;font-size:8.8px;color:#4db3a7;">1</span>
<div class="r" style="left:457.28px;top:765px;width:1px;height:23.8px;background:#e2e2e2;"></div>
<span class="t" style="left:465.08px;top:772.92px;font-size:8.6px;color:#c4c4c4;">...</span>
<div class="r" style="left:480.06px;top:765px;width:1px;height:23.8px;background:#e2e2e2;"></div>
<span class="t" style="left:486.55px;top:773.05px;font-size:8.8px;color:#4db3a7;">93</span>
<div class="r" style="left:502.83px;top:765px;width:1px;height:23.8px;background:#e2e2e2;"></div>
<span class="t" style="left:509.33px;top:773.05px;font-size:8.8px;color:#4db3a7;">94</span>
<div class="r" style="left:525.61px;top:765px;width:1px;height:23.8px;background:#e2e2e2;"></div>
<span class="t" style="left:532.11px;top:773.05px;font-size:8.8px;font-weight:700;color:#111;">95</span>
<div class="r" style="left:548.39px;top:765px;width:1px;height:23.8px;background:#e2e2e2;"></div>
<span class="t" style="left:554.88px;top:773.05px;font-size:8.8px;color:#4db3a7;">96</span>
<div class="r" style="left:571.17px;top:765px;width:1px;height:23.8px;background:#e2e2e2;"></div>
<span class="t" style="left:577.66px;top:773.05px;font-size:8.8px;color:#4db3a7;">97</span>
<div class="r" style="left:593.94px;top:765px;width:1px;height:23.8px;background:#e2e2e2;"></div>
<span class="t" style="left:601.75px;top:772.92px;font-size:8.6px;color:#c4c4c4;">...</span>
<div class="r" style="left:616.72px;top:765px;width:1px;height:23.8px;background:#e2e2e2;"></div>
<span class="t" style="left:620.77px;top:773.05px;font-size:8.8px;color:#4db3a7;">100</span>
<svg class="r" style="left:640px;top:801px;" width="4" height="4" viewBox="0 0 4 4"><path d="M3.5 0.5 V3.5 H0.5" fill="none" stroke="#555" stroke-width="0.9"/></svg>
</section>
<section>
<div class="r" style="left:670px;top:156px;width:515.4px;height:392.6px;background:#fff;"></div>
<span class="t" style="left:677.5px;top:161.1px;font-size:17.6px;color:#2b2b2b;transform:scaleX(0.8153);">Тепловая карта. Загруженность медицинских организаций.</span>
<svg class="r" style="left:1080.8px;top:167.6px;" width="8.4" height="8.4" viewBox="0 0 8.4 8.4"><path d="M4.2 0.7 L5.25 3.05 L7.8 3.3 L5.9 5.05 L6.45 7.55 L4.2 6.25 L1.95 7.55 L2.5 5.05 L0.6 3.3 L3.15 3.05 Z" fill="none" stroke="#1fa698" stroke-width="0.9" stroke-linejoin="round"/></svg>
<svg class="r" style="left:1093px;top:167.6px;" width="9" height="8.4" viewBox="0 0 9 8.4"><path d="M6.6 4.6 V7.4 H0.8 V2 H4.4" fill="none" stroke="#1fa698" stroke-width="1"/><path d="M3.4 5.9 L3.8 4.4 L7.2 1 L8.2 2 L4.8 5.4 Z" fill="#1fa698"/></svg>
<div class="r" style="left:726px;top:193px;width:35.6px;height:11px;background:#b3b3b3;border-radius:1.5px;"></div>
<span class="t" style="left:728.5px;top:195.09px;font-size:7px;font-weight:700;color:#fff;transform:scaleX(0.9272);">288 строк</span>
<div class="r" style="left:765px;top:193px;width:34.5px;height:11px;background:#b3b3b3;border-radius:1.5px;"></div>
<span class="t" style="left:768px;top:195.07px;font-size:7px;font-weight:700;color:#fff;transform:scaleX(0.8912);">cached</span>
<svg class="r" style="left:790.5px;top:195.6px;" width="6" height="6" viewBox="0 0 6 6"><path d="M5.2 3 A2.3 2.3 0 1 1 4.4 1.3" fill="none" stroke="#fff" stroke-width="0.9"/><path d="M3.6 0 L5.8 0.3 L4.6 2.1z" fill="#fff"/></svg>
<div class="r" style="left:803px;top:193px;width:39.3px;height:11px;background:#41b851;border-radius:1.5px;"></div>
<span class="t" style="left:805.5px;top:195.09px;font-size:7px;font-weight:700;color:#fff;transform:scaleX(0.9085);">00:00:00.86</span>
<div class="r btn" style="left:845px;top:185px;width:255px;height:22px;background:#fff;"></div>
<div class="r" style="left:866.5px;top:185px;width:1px;height:22px;background:#ccc;"></div>
<div class="r" style="left:888.5px;top:185px;width:1px;height:22px;background:#ccc;"></div>
<div class="r" style="left:924.5px;top:185px;width:1px;height:22px;background:#ccc;"></div>
<div class="r" style="left:956.5px;top:185px;width:1px;height:22px;background:#ccc;"></div>
<div class="r" style="left:990.5px;top:185px;width:1px;height:22px;background:#ccc;"></div>
<div class="r" style="left:1022.5px;top:185px;width:1px;height:22px;background:#ccc;"></div>
<svg class="r" style="left:851.5px;top:191.5px;" width="8" height="8" viewBox="0 0 8 8"><circle cx="2.3" cy="2.3" r="1.6" fill="none" stroke="#444" stroke-width="1"/><circle cx="5.6" cy="5.6" r="1.6" fill="none" stroke="#444" stroke-width="1"/><path d="M3.2 3.2 L4.7 4.7" stroke="#444" stroke-width="1"/></svg>
<span class="t" style="left:872.5px;top:192.67px;font-size:7px;color:#555;transform:scaleX(0.7905);">&lt;/&gt;</span>
<svg class="r" style="left:895px;top:191.6px;" width="6.2" height="8" viewBox="0 0 6.2 8"><path d="M0.5 0.4 h3.4 l1.8 1.8 v5.4 h-5.2z" fill="none" stroke="#555" stroke-width="0.8"/><path d="M1.6 4 h3 M1.6 5.6 h3" stroke="#555" stroke-width="0.6"/></svg>
<span class="t" style="left:903.7px;top:191.04px;font-size:9.4px;color:#555;transform:scaleX(0.7202);">.json</span>
<svg class="r" style="left:931px;top:191.6px;" width="6.2" height="8" viewBox="0 0 6.2 8"><path d="M0.5 0.4 h3.4 l1.8 1.8 v5.4 h-5.2z" fill="none" stroke="#555" stroke-width="0.8"/><path d="M1.6 4 h3 M1.6 5.6 h3" stroke="#555" stroke-width="0.6"/></svg>
<span class="t" style="left:939.5px;top:191.04px;font-size:9.4px;color:#555;transform:scaleX(0.7447);">.xls</span>
<svg class="r" style="left:962.5px;top:191.6px;" width="6.2" height="8" viewBox="0 0 6.2 8"><path d="M0.5 0.4 h3.4 l1.8 1.8 v5.4 h-5.2z" fill="none" stroke="#555" stroke-width="0.8"/><path d="M1.6 4 h3 M1.6 5.6 h3" stroke="#555" stroke-width="0.6"/></svg>
<span class="t" style="left:971px;top:191.04px;font-size:9.4px;color:#555;transform:scaleX(0.76);">.csv</span>
<svg class="r" style="left:996.5px;top:191.6px;" width="6.2" height="8" viewBox="0 0 6.2 8"><path d="M0.5 0.4 h3.4 l1.8 1.8 v5.4 h-5.2z" fill="none" stroke="#555" stroke-width="0.8"/><path d="M1.6 4 h3 M1.6 5.6 h3" stroke="#555" stroke-width="0.6"/></svg>
<span class="t" style="left:1005px;top:191.04px;font-size:9.4px;color:#555;transform:scaleX(0.7654);">.pdf</span>
<span class="t" style="left:1029.5px;top:191.04px;font-size:9.4px;color:#555;transform:scaleX(0.7659);">Посмотреть запрос</span>
<svg class="r" style="left:678px;top:217.5px;overflow:hidden;" width="286.5" height="333" viewBox="0 0 286.5 333"><rect width="286.5" height="333" fill="#f4f2ed"/><polygon points="68.19,234.46 114.68,217.14 180.32,242.66 180.32,334.55 83.69,334.55 80.04,284.6 74.57,255.43" fill="#e9e9e8"/><polygon points="0,0 78,0 62,8.5 6.5,8.5 6.5,30 0,32" fill="#e3e3e2"/><polygon points="194.85,-0.01 286.28,-0.01 286.28,109.91 279.28,132.4 218.08,132.4" fill="#dddce9"/><polygon points="266.79,67.44 286.28,64.95 286.28,109.91 279.28,132.4 271.79,132.4" fill="#eeedf3"/><polygon points="177.36,-0.01 204.84,-0.01 219.83,167.37 202.34,167.37" fill="#d3f0c3"/><polyline points="185.6,-0.01 208.84,167.37" fill="none" stroke="#e4f6d9" stroke-width="1.2" stroke-linecap="butt" stroke-linejoin="round"/><polygon points="177.58,225.34 202.01,218.96 202.01,235.37 180.32,239.02" fill="#dff2d3"/><polygon points="176.33,226.42 200.04,220.23 202.1,233.63 178.39,239.82" fill="#dff2d3"/><polygon points="102.1,62.57 112.17,60.89 113.85,70.13 103.78,71.81" fill="#dff2d3"/><polygon points="63.48,81.88 81.95,77.68 82.79,83.56 64.32,87.76" fill="#e3f3d9"/><polygon points="9.75,60.89 39.97,57.54 41.99,64.25 66,69.29 69.36,77.68 48.37,90.28 34.1,101.19 23.18,101.19" fill="#e4dfd6"/><polygon points="25.7,66.77 45.01,62.24 48.37,68.95 29.9,73.99" fill="#f4f2ed"/><polygon points="48.37,88.6 124.76,70.63 128.12,81.38 51.73,99.85" fill="#e4dfd6"/><polygon points="70.2,60.56 92.02,57.54 95.72,69.29 73.89,72.98" fill="#dbdad9"/><polygon points="113.85,60.56 124.26,58.88 130.98,82.39 120.9,85.24" fill="#e4dfd6"/><polygon points="132.32,60.89 155.82,57.2 157.17,62.24 175.97,59.55 177.31,69.29 134.33,74.66" fill="#e4dfd6"/><polygon points="134.33,71.3 145.75,69.29 147.43,77.68 136.01,80.2" fill="#dbdad9"/><polygon points="141.89,-0.01 166.87,-0.01 178.11,64.95 154.88,71.94" fill="#e4dfd6"/><polygon points="-0.51,59.95 6.99,57.95 10.74,74.94 -0.51,78.69" fill="#e4dfd6"/><polygon points="19.83,127.21 181.01,88.6 188.56,127.21 138.19,144 131.48,113.78 112.17,112.1 113.85,118.82 37.46,138.97" fill="#e4dfd6"/><polygon points="142.39,105.39 149.95,103.71 153.31,127.21 146.59,128.89" fill="#f4f2ed"/><polygon points="160.02,98.67 172.61,96.15 175.97,119.66 164.22,122.18" fill="#f4f2ed"/><polygon points="36.62,140.65 65.16,136.11 75.57,143.16 73.89,151.9 67.17,153.57 70.53,166.67 55.42,170.36 48.37,159.95 39.97,160.29" fill="#e4dfd6"/><circle cx="70.53" cy="144" r="5.2" fill="#e4dfd6"/><polygon points="90.34,136.78 113.85,126.38 117.54,134.77 99.07,146.86 93.7,146.52" fill="#e4dfd6"/><polygon points="81.95,156.6 105.45,149.88 109.15,163.31 85.31,168.69" fill="#dbdad9"/><polygon points="119.22,141.49 130.64,138.97 133.33,151.56 121.57,154.25" fill="#dbdad9"/><polygon points="122.58,119.66 128.96,118.32 130.98,130.57 124.26,131.92" fill="#dbdad9"/><polygon points="124.26,164.66 134.33,161.97 146.09,192.53 130.98,192.53" fill="#e4dfd6"/><polygon points="78.59,180.44 118.89,170.03 125.94,192.53 78.93,192.53" fill="#e4dfd6"/><polygon points="88.66,180.1 97.06,178.09 100.42,190.18 92.02,192.53" fill="#f4f2ed"/><polygon points="105.45,175.9 113.85,173.72 117.54,186.82 109.15,188.83" fill="#f4f2ed"/><polygon points="46.69,170.03 71.88,168.35 76.91,192.53 53.41,192.53" fill="#e4dfd6"/><polygon points="181.01,131.41 187.39,130.07 191.08,159.95 184.7,161.3" fill="#e4dfd6"/><polygon points="169.26,159.95 177.31,158.28 179.33,172.55 170.93,174.23" fill="#dbdad9"/><polygon points="173.96,175.9 182.35,174.23 183.7,182.62 175.3,184.3" fill="#f4d3d6"/><polygon points="159.18,170.03 167.58,168.35 169.26,177.58 160.53,179.26" fill="#dbdad9"/><polygon points="49.96,182.5 129.27,182.5 167.55,193.8 64,222.24 58.16,204.38" fill="#e4dfd6"/><polygon points="59.99,189.79 70.93,187.06 76.4,206.2 65.82,209.48" fill="#f4f2ed"/><polygon points="92.8,182.5 107.39,182.5 111.04,193.44 97.36,197.09" fill="#f4f2ed"/><polygon points="136.56,182.5 202.01,182.5 202.01,186.15 180.32,187.97 169.38,192.53" fill="#e4dfd6"/><polygon points="79.13,228.99 92.8,225.89 97.36,242.66 83.69,246.31" fill="#dbdad9"/><polygon points="96.45,242.66 107.39,239.93 114.68,268.19 94.63,273.66" fill="#e0dfde"/><polygon points="92.8,268.19 114.68,262.72 123.8,328.35 100.1,328.35 85.51,284.6" fill="#dbdad9"/><polygon points="123.8,246.31 154.79,240.84 158.44,268.19 143.85,270.01 149.32,299.18 132.91,302.83" fill="#dbdad9"/><polygon points="143.85,206.2 160.26,202.55 163,217.14 146.59,221.15" fill="#e4dfd6"/><polygon points="173.02,198.91 193.08,193.44 195.81,209.85 175.76,215.32" fill="#e4dfd6"/><polygon points="160.26,242.66 180.32,238.11 184.87,277.3 164.82,281.86" fill="#e4dfd6"/><polygon points="149.32,281.86 162.08,279.13 166.64,317.41 152.97,320.15" fill="#e4dfd6"/><polygon points="171.2,285.51 191.25,281.86 195.81,317.41 175.76,321.06" fill="#e4dfd6"/><polygon points="80.04,262.72 89.16,259.98 91.89,274.57 82.78,277.3" fill="#dbdad9"/><polygon points="80.18,229.03 117.34,224.49 119.45,250.17 82.59,255.31" fill="#dbdad9"/><polygon points="128.51,247.15 159.63,242.02 163.56,290.96 132.74,295.79" fill="#dbdad9"/><polygon points="162.65,227.52 179.27,225.1 182.89,275.85 165.98,278.87" fill="#e0dfde"/><polygon points="127.91,297.61 157.52,293.98 159.93,324.19 130.93,327.82" fill="#dbdad9"/><polygon points="213.44,174.87 228.91,170.75 230.97,183.12 215.51,187.24" fill="#e4dfd6"/><polygon points="208.29,189.3 218.6,186.83 222.72,228.48 213.44,231.57" fill="#e4dfd6"/><polygon points="247.46,193.43 266.02,189.3 270.14,214.05 252.62,218.17" fill="#e4dfd6"/><polygon points="274.27,182.09 284.58,180.03 286.64,195.49 276.33,197.96" fill="#e4dfd6"/><polygon points="228.91,234.66 255.71,227.45 257.77,238.79 230.97,244.97" fill="#e4dfd6"/><polygon points="261.9,226.42 292,219.2 292,249.1 266.02,253.22" fill="#e4dfd6"/><polygon points="239.22,273.84 276.33,265.59 280.45,296.52 244.37,302.71" fill="#e4dfd6"/><polygon points="214.47,240.85 222.72,239.2 225.81,261.47 216.95,263.53" fill="#e4dfd6"/><polygon points="144.37,205.8 160.87,201.68 162.93,218.17 146.85,222.29" fill="#e4dfd6"/><polygon points="173.24,201.68 193.86,196.52 196.33,214.05 176.33,219.2" fill="#e4dfd6"/><polygon points="179.42,204.77 189.73,202.09 191.18,210.95 181.07,213.63" fill="#f4f2ed"/><polygon points="169.11,249.1 179.42,247.04 181.48,269.72 171.59,271.78" fill="#e4dfd6"/><polygon points="200.04,240.85 208.7,239.2 213.44,294.46 204.16,296.52" fill="#e4dfd6"/><polygon points="218.08,137.39 239.31,134.89 241.81,167.37 220.58,170.37" fill="#e4dfd6"/><polygon points="244.31,134.89 264.3,132.4 266.79,152.38 246.81,154.88" fill="#e4dfd6"/><polygon points="271.79,136.14 286.28,133.64 286.28,167.37 274.29,169.87" fill="#e4dfd6"/><polyline points="-2,128.89 181.01,82.39" fill="none" stroke="#fdfdfc" stroke-width="13" stroke-linecap="butt" stroke-linejoin="round"/><polyline points="-2,128.89 181.01,82.39" fill="none" stroke="#ece8e0" stroke-width="0.6" stroke-linecap="butt" stroke-linejoin="round"/><polyline points="62.72,228.08 202.01,186.51" fill="none" stroke="#fdfdfc" stroke-width="7.5" stroke-linecap="butt" stroke-linejoin="round"/><polyline points="202.01,186.51 253.24,171.2" fill="none" stroke="#fdfdfc" stroke-width="7.5" stroke-linecap="butt" stroke-linejoin="round"/><polyline points="212.41,237.14 292,214.05" fill="none" stroke="#fdfdfc" stroke-width="5" stroke-linecap="butt" stroke-linejoin="round"/><polyline points="132,234.66 200.04,217.76" fill="none" stroke="#fdfdfc" stroke-width="4" stroke-linecap="butt" stroke-linejoin="round"/><polyline points="111.4,215.32 133.28,334.55" fill="none" stroke="#fdfdfc" stroke-width="1.6" stroke-linecap="butt" stroke-linejoin="round"/><polyline points="70.93,235.37 114.68,218.96" fill="none" stroke="#fdfdfc" stroke-width="3" stroke-linecap="butt" stroke-linejoin="round"/><polyline points="74.57,255.43 100.1,246.31" fill="none" stroke="#fdfdfc" stroke-width="2" stroke-linecap="butt" stroke-linejoin="round"/><polyline points="210.35,181.06 263.96,168.69" fill="none" stroke="#fdfdfc" stroke-width="3" stroke-linecap="butt" stroke-linejoin="round"/><polyline points="83,268 86.5,300 90.5,336" fill="none" stroke="#f6e4b0" stroke-width="2.6" stroke-linecap="butt" stroke-linejoin="round"/><polygon points="-11.5,104 -3.3,119.7 15,156 32.2,188 49.5,219 57.4,249.3 63.8,276.2 70.6,309.7 75.2,336 83.8,336 80.2,309.7 75.8,276.2 70.6,249.3 63.5,219 46.8,188 30,156 11.7,119.7 3.5,104" fill="#eec56a"/><polygon points="-10.2,104 -2,119.7 16.3,156 33.5,188 50.8,219 58.7,249.3 65.1,276.2 71.9,309.7 76.5,336 82.5,336 78.9,309.7 74.5,276.2 69.3,249.3 62.2,219 45.5,188 28.7,156 10.4,119.7 2.2,104" fill="#f9da88"/><polygon points="0,156 13.5,184 31,219 49,249.3 57,276.2 61.8,309.7 64,336 0,336" fill="#a7d4f4"/><polygon points="167.4,0 175.6,0 224.9,333 219.3,333" fill="#ecdfb4"/><polygon points="168.4,0 174.6,0 224.1,333 220.1,333" fill="#fcf0c2"/><path d="M279 0 L286.5 36" stroke="#f08a8a" stroke-width="0.6" fill="none"/></svg>
<div class="r" style="left:678px;top:217.5px;width:286.5px;height:333px;overflow:hidden">
<span class="t" style="left:153.37px;top:0.68px;font-size:6.3px;color:#87837c;">62</span>
<span class="t" style="left:140.57px;top:23.16px;font-size:6.3px;color:#87837c;">3Л</span>
<span class="t" style="left:130.94px;top:71.87px;font-size:6.3px;color:#87837c;">3Г</span>
<span class="t" style="left:148.88px;top:95.61px;font-size:6.3px;color:#87837c;">60</span>
<span class="t" style="left:30.65px;top:85.11px;font-size:6.3px;color:#87837c;">3Л</span>
<span class="t" style="left:10.23px;top:109.35px;font-size:6.3px;color:#87837c;">3</span>
<span class="t" style="left:38.46px;top:128.58px;font-size:6.3px;color:#87837c;">2</span>
<span class="t" style="left:101.91px;top:129.33px;font-size:6.3px;color:#87837c;">60У</span>
<span class="t" style="left:51.22px;top:149.32px;font-size:6.3px;color:#87837c;">4к1А</span>
<span class="t" style="left:93.79px;top:153.56px;font-size:6.3px;color:#87837c;">60М</span>
<span class="t" style="left:172.86px;top:151.06px;font-size:6.3px;color:#87837c;">58</span>
<span class="t" style="left:219.22px;top:146.32px;font-size:6.3px;color:#87837c;">61А</span>
<span class="t" style="left:242.28px;top:146.32px;font-size:6.3px;color:#87837c;">63С</span>
<span class="t" style="left:213.2px;top:168.8px;font-size:6.3px;color:#87837c;">61к2</span>
<span class="t" style="left:129.11px;top:178.04px;font-size:6.3px;color:#87837c;">60Н</span>
<span class="t" style="left:45.85px;top:184.29px;font-size:6.3px;color:#87837c;">45Е</span>
<span class="t" style="left:98.65px;top:194.78px;font-size:6.3px;color:#87837c;">60И</span>
<span class="t" style="left:72.93px;top:213.13px;font-size:6.3px;color:#87837c;">43</span>
<span class="t" style="left:212.08px;top:215.63px;font-size:6.3px;color:#87837c;">57</span>
<span class="t" style="left:255.55px;top:200.64px;font-size:6.3px;color:#87837c;">6</span>
<span class="t" style="left:247.06px;top:229.87px;font-size:6.3px;color:#87837c;">1</span>
<span class="t" style="left:278.78px;top:223.12px;font-size:6.3px;color:#87837c;">3</span>
<span class="t" style="left:195.34px;top:237.61px;font-size:6.3px;color:#87837c;">52</span>
<span class="t" style="left:162.88px;top:253.1px;font-size:6.3px;color:#87837c;">7Ак2</span>
<span class="t" style="left:78.43px;top:259.35px;font-size:6.3px;color:#87837c;">41</span>
<span class="t" style="left:99.03px;top:278.33px;font-size:6.3px;color:#87837c;">6к2</span>
<span class="t" style="left:156.37px;top:283.08px;font-size:6.3px;color:#87837c;">9</span>
<span class="t" style="left:180.78px;top:277.58px;font-size:6.3px;color:#87837c;">48Б</span>
<span class="t" style="left:92.92px;top:303.56px;font-size:6.3px;color:#87837c;">39</span>
<span class="t" style="left:158.38px;top:304.81px;font-size:6.3px;color:#87837c;">7АЛ</span>
<span class="t" style="left:127.01px;top:328.79px;font-size:6.3px;color:#87837c;">4к1</span>
<span class="t" style="left:62.7px;top:103.14px;font-size:8px;color:#474747;transform-origin:0 6.77px;transform:rotate(-14.4deg) scaleX(0.8037);">Гельсингфорсская ул.</span>
<span class="t" style="left:126.9px;top:201.43px;font-size:8px;color:#474747;transform-origin:0 6.77px;transform:rotate(-17.3deg) scaleX(0.8048);">Беловодский пер.</span>
<span class="t" style="left:121.9px;top:262.97px;font-size:7.6px;color:#474747;transform-origin:0 6.43px;transform:rotate(77.5deg) scaleX(0.9421);">Зеленков пер.</span>
<span class="t" style="left:161.87px;top:330.11px;font-size:6.2px;color:#555;transform-origin:0 5.25px;transform:rotate(-14deg) scaleX(1.0911);">Ватутина ул.</span>
<span class="t" style="left:261.8px;top:330.86px;font-size:6.2px;color:#555;transform-origin:0 5.25px;transform:rotate(-14deg) scaleX(1.0504);">Арсенальная</span>
<svg class="r" style="left:158.12px;top:35.46px" width="9" height="9" viewBox="0 0 9 9"><circle cx="4.5" cy="4.1" r="3.6" fill="#fff" stroke="#e47f33" stroke-width="1.6"/></svg>
<span class="t" style="left:150.37px;top:47.86px;font-size:7.4px;font-weight:700;color:#e47f33;transform:scaleX(0.8761);">Subway</span>
<svg class="r" style="left:24.47px;top:145.13px" width="11" height="11" viewBox="0 0 11 11"><circle cx="5.5" cy="5.5" r="5" fill="#e47f33"/><path d="M4 2.6 V5 M4 5 V8.4 M3.2 2.6 V4.4 Q3.2 5 4 5 Q4.8 5 4.8 4.4 V2.6 M6.9 2.6 V8.4 M6.9 2.6 Q5.9 3.6 6.2 5.4 H6.9" stroke="#fff" stroke-width="0.7" fill="none"/></svg>
<span class="t" style="left:17.97px;top:159.52px;font-size:7.4px;font-weight:700;color:#e47f33;transform:scaleX(0.8711);">Puberty</span>
<svg class="r" style="left:119.65px;top:212.69px" width="11" height="11" viewBox="0 0 11 11"><circle cx="5.5" cy="5.5" r="5" fill="#a9a9a9"/><path d="M4 2.6 V8.6 M4 3 H7.6 L6.8 4.4 L7.6 5.8 H4" stroke="#fff" stroke-width="0.8" fill="#fff"/></svg>
<span class="t" style="left:102.4px;top:226.58px;font-size:7.4px;color:#7b7b7b;transform:scaleX(0.9384);">Нева Энергия</span>
<svg class="r" style="left:215.08px;top:253.41px" width="11" height="11" viewBox="0 0 11 11"><circle cx="5.5" cy="5.5" r="5" fill="#a9a9a9"/><path d="M5.5 2.4 V8.6 M3.6 4.4 H7.4" stroke="#fff" stroke-width="1"/></svg>
<span class="t" style="left:228.07px;top:246.85px;font-size:7.4px;color:#7b7b7b;transform:scaleX(0.9264);">Введенско-</span>
<span class="t" style="left:228.07px;top:255.22px;font-size:7.4px;color:#7b7b7b;transform:scaleX(0.971);">Оятское</span>
<span class="t" style="left:228.07px;top:263.59px;font-size:7.4px;color:#7b7b7b;transform:scaleX(0.9589);">подворье</span>
<svg class="r" style="left:250.55px;top:171.61px" width="10" height="10" viewBox="0 0 10 10"><circle cx="5" cy="5" r="4.5" fill="#a9a9a9"/><circle cx="5" cy="5" r="2" fill="none" stroke="#fff" stroke-width="0.9"/></svg>
<span class="t" style="left:244.8px;top:182.75px;font-size:7.4px;color:#7b7b7b;transform:scaleX(0.9465);">ТКУИК</span>
<svg class="r" style="left:244.31px;top:55.45px" width="10" height="10" viewBox="0 0 10 10"><circle cx="5" cy="5" r="4.6" fill="#56b02a"/></svg>
<span class="t" style="left:225.06px;top:65.54px;font-size:7px;color:#3f9f2a;transform:scaleX(0.9719);">Стадион ВИФК</span>
<svg class="r" style="left:177.66px;top:88.22px" width="8.4" height="9.4" viewBox="0 0 8.4 9.4"><rect x="0.3" y="0.3" width="7.8" height="8.8" rx="1.6" fill="#2d7be0" stroke="#fff" stroke-width="0.6"/><path d="M2.2 2.6 H6.2 V6 H2.2Z M2.8 6.6 V7.4 M5.6 6.6 V7.4" fill="none" stroke="#fff" stroke-width="0.8"/></svg>
<svg class="r" style="left:189.65px;top:98.47px" width="8.4" height="9.4" viewBox="0 0 8.4 9.4"><rect x="0.3" y="0.3" width="7.8" height="8.8" rx="1.6" fill="#2d7be0" stroke="#fff" stroke-width="0.6"/><path d="M2.2 2.6 H6.2 V6 H2.2Z M2.8 6.6 V7.4 M5.6 6.6 V7.4" fill="none" stroke="#fff" stroke-width="0.8"/></svg>
<svg class="r" style="left:29.77px;top:226.48px" width="8.4" height="9.4" viewBox="0 0 8.4 9.4"><rect x="0.3" y="0.3" width="7.8" height="8.8" rx="1.6" fill="#2d7be0" stroke="#fff" stroke-width="0.6"/><path d="M2.2 2.6 H6.2 V6 H2.2Z M2.8 6.6 V7.4 M5.6 6.6 V7.4" fill="none" stroke="#fff" stroke-width="0.8"/></svg>
<svg class="r" style="left:209.63px;top:276.7px" width="8.4" height="9.4" viewBox="0 0 8.4 9.4"><rect x="0.3" y="0.3" width="7.8" height="8.8" rx="1.6" fill="#2d7be0" stroke="#fff" stroke-width="0.6"/><path d="M2.2 2.6 H6.2 V6 H2.2Z M2.8 6.6 V7.4 M5.6 6.6 V7.4" fill="none" stroke="#fff" stroke-width="0.8"/></svg>
<svg class="r" style="left:222.12px;top:304.67px" width="8.4" height="9.4" viewBox="0 0 8.4 9.4"><rect x="0.3" y="0.3" width="7.8" height="8.8" rx="1.6" fill="#2d7be0" stroke="#fff" stroke-width="0.6"/><path d="M2.2 2.6 H6.2 V6 H2.2Z M2.8 6.6 V7.4 M5.6 6.6 V7.4" fill="none" stroke="#fff" stroke-width="0.8"/></svg>
<svg class="r" style="left:0;top:0" width="286.5" height="333"><defs><radialGradient id="hb1"><stop offset="0" stop-color="#ff7a1a"/><stop offset="0.35" stop-color="#ff3b10"/><stop offset="0.8" stop-color="#f31212"/><stop offset="1" stop-color="#f01010" stop-opacity="0.85"/></radialGradient><radialGradient id="hb2"><stop offset="0" stop-color="#4fe000"/><stop offset="0.16" stop-color="#b8e800"/><stop offset="0.34" stop-color="#ffe600"/><stop offset="0.6" stop-color="#ff8a00"/><stop offset="0.85" stop-color="#f51c10"/><stop offset="1" stop-color="#f01010" stop-opacity="0.85"/></radialGradient></defs>
<circle cx="161.87" cy="29.47" r="8.6" fill="url(#hb1)"/>
<circle cx="189.35" cy="174.23" r="8.6" fill="url(#hb2)"/>
<circle cx="228.32" cy="208.2" r="8.6" fill="url(#hb2)"/>
</svg>
</div>
<div class="r" style="left:684.5px;top:225.5px;width:130px;height:50px;background:rgba(255,255,255,.94);border-radius:3.5px;"></div>
<span class="t" style="left:690px;top:232.3px;font-size:9.8px;color:#8a8a8a;transform:scaleX(0.8563);">Количество записей на прием</span>
<div class="r" style="left:690px;top:248px;width:119.5px;height:4.5px;border-radius:2.5px;background:linear-gradient(90deg,#f41010 0%,#ff6a00 22%,#ffb000 42%,#fff000 62%,#a8ee00 80%,#12e012 100%);"></div>
<span class="t" style="left:690px;top:258.7px;font-size:9.8px;color:#222;transform:scaleX(0.6605);">1</span>
<span class="t" style="left:729px;top:258.7px;font-size:9.8px;color:#222;transform:scaleX(0.844);">13106</span>
<span class="t" style="left:786.7px;top:258.7px;font-size:9.8px;color:#222;transform:scaleX(0.8293);">50988</span>
<div class="r" style="left:690.6px;top:312px;width:3.6px;height:107px;background:#fff;border:0.6px solid #c8c8c8;"></div>
<div class="r" style="left:684.5px;top:293.7px;width:16px;height:18.8px;background:#fff;box-shadow:0 1px 2px rgba(0,0,0,.3);border-radius:2.5px;"></div>
<svg class="r" style="left:688.2px;top:298.6px;" width="8.6" height="8.6" viewBox="0 0 8.6 8.6"><path d="M4.3 0.4 V8.2 M0.4 4.3 H8.2" stroke="#444" stroke-width="1.9"/></svg>
<div class="r" style="left:684.5px;top:336px;width:16px;height:9px;background:#fff;box-shadow:0 1px 2px rgba(0,0,0,.3);border-radius:2.5px;"></div>
<svg class="r" style="left:689.8px;top:339px;" width="5.4" height="3" viewBox="0 0 5.4 3"><path d="M0 0.6 H5.4 M0 2.4 H5.4" stroke="#aaa" stroke-width="0.5" stroke-dasharray="0.9 0.6"/></svg>
<div class="r" style="left:684.5px;top:418px;width:16px;height:19px;background:#fff;box-shadow:0 1px 2px rgba(0,0,0,.3);border-radius:2.5px;"></div>
<svg class="r" style="left:688.2px;top:426.4px;" width="8.6" height="2.4" viewBox="0 0 8.6 2.4"><path d="M0.4 1.2 H8.2" stroke="#444" stroke-width="2"/></svg>
<div class="r" style="left:883px;top:224.5px;width:51.5px;height:19.3px;background:#fff;box-shadow:0 1px 2px rgba(0,0,0,.3);border-radius:2.5px;"></div>
<svg class="r" style="left:886.4px;top:228.4px;" width="10.4" height="11.6" viewBox="0 0 10.4 11.6"><path d="M5.2 0.6 L9.8 3 L5.2 5.4 L0.6 3 Z M0.6 5.2 L5.2 7.6 L9.8 5.2 M0.6 7.4 L5.2 9.8 L9.8 7.4 M0.6 6.3 L5.2 8.7 L9.8 6.3" fill="none" stroke="#333" stroke-width="0.8" stroke-linejoin="round"/></svg>
<span class="t" style="left:902px;top:229.13px;font-size:10px;color:#222;transform:scaleX(0.7402);">Слои</span>
<svg class="r" style="left:923.8px;top:232.2px;" width="6.6" height="4.8" viewBox="0 0 6.6 4.8"><path d="M0.6 0.8 L3.3 3.5 L6 0.8" fill="none" stroke="#333" stroke-width="1.0" stroke-linecap="round" stroke-linejoin="round"/></svg>
<div class="r" style="left:942px;top:224.5px;width:16px;height:19.3px;background:#fff;box-shadow:0 1px 2px rgba(0,0,0,.3);border-radius:2.5px;"></div>
<svg class="r" style="left:945.6px;top:229.6px;" width="9" height="9" viewBox="0 0 9 9"><path d="M5.4 0.6 H8.4 V3.6 Z M3.6 8.4 H0.6 V5.4 Z" fill="#333"/><path d="M7.6 1.4 L5.4 3.6 M1.4 7.6 L3.6 5.4" stroke="#333" stroke-width="1.2"/></svg>
<div class="r" style="left:885.5px;top:259.5px;width:72.5px;height:19.3px;background:#fff;box-shadow:0 1px 2px rgba(0,0,0,.3);border-radius:2.5px;"></div>
<span class="t" style="left:893.6px;top:264.19px;font-size:10px;color:#222;transform:scaleX(0.7778);">Тепловая карта</span>
<div class="r" style="left:895px;top:287.5px;width:63px;height:19.5px;background:#fff;box-shadow:0 1px 2px rgba(0,0,0,.3);border-radius:2.5px;"></div>
<span class="t" style="left:902.6px;top:292.29px;font-size:10px;color:#222;transform:scaleX(0.7837);">Рассеивание</span>
<div class="r" style="left:892px;top:315.5px;width:66px;height:19.5px;background:#fff;box-shadow:0 1px 2px rgba(0,0,0,.3);border-radius:2.5px;"></div>
<span class="t" style="left:899.5px;top:320.29px;font-size:10px;color:#222;transform:scaleX(0.7796);">Прозрачность</span>
<div class="r" style="left:909px;top:343.8px;width:49px;height:19.2px;background:#fff;box-shadow:0 1px 2px rgba(0,0,0,.3);border-radius:2.5px;"></div>
<span class="t" style="left:916.5px;top:348.44px;font-size:10px;color:#222;transform:scaleX(0.7779);">Градиент</span>
<div class="r" style="left:916px;top:372px;width:42px;height:19.2px;background:#fff;box-shadow:0 1px 2px rgba(0,0,0,.3);border-radius:2.5px;"></div>
<span class="t" style="left:924px;top:376.64px;font-size:10px;color:#222;transform:scaleX(0.7829);">Радиус</span>
<svg class="r" style="left:889.5px;top:518px;" width="47" height="6" viewBox="0 0 47 6"><path d="M0.4 0 V6 M0.4 3 H9 M38 3 H46.6 M46.6 0 V6" stroke="#222" stroke-width="0.8" fill="none"/></svg>
<span class="t" style="left:904.5px;top:517.12px;font-size:8.6px;color:#222;transform:scaleX(0.9514);">90 м</span>
<div class="r" style="left:941px;top:511px;width:17px;height:19px;background:#fff;box-shadow:0 1px 2px rgba(0,0,0,.3);border-radius:2.5px;"></div>
<svg class="r" style="left:944px;top:518px;" width="11" height="5" viewBox="0 0 11 5"><rect x="0.4" y="0.4" width="10.2" height="3.8" fill="none" stroke="#555" stroke-width="0.7"/><path d="M2 0.4 V2 M3.6 0.4 V2 M5.2 0.4 V2 M6.8 0.4 V2 M8.4 0.4 V2" stroke="#555" stroke-width="0.5"/></svg>
<div class="r" style="left:683px;top:530px;width:104px;height:15.5px;background:#fff;box-shadow:0 1px 2px rgba(0,0,0,.3);border-radius:2.5px;"></div>
<svg class="r" style="left:685.6px;top:532.2px;" width="8.4" height="11" viewBox="0 0 8.4 11"><path d="M4.2 10.6 Q0.6 6.2 0.6 4 A3.6 3.6 0 0 1 7.8 4 Q7.8 6.2 4.2 10.6Z" fill="#f43"/><circle cx="4.2" cy="4" r="1.4" fill="#fff"/></svg>
<span class="t" style="left:698px;top:533.41px;font-size:9.2px;color:#222;transform:scaleX(0.7809);">Открыть в Яндекс.Картах</span>
<span class="t" style="left:794.5px;top:533.83px;font-size:8px;font-weight:700;color:#333;transform:scaleX(0.8623);text-decoration:underline;">API</span>
<div class="r" style="left:841px;top:534.5px;width:123.5px;height:10.5px;background:rgba(255,255,255,.75);"></div>
<span class="t" style="left:843px;top:535.72px;font-size:8.6px;color:#222;transform:scaleX(0.8234);">© Яндекс</span>
<span class="t" style="left:876.5px;top:535.72px;font-size:8.6px;color:#222;transform:scaleX(0.8748);text-decoration:underline;">Условия использования</span>
</section>
<section>
<div class="r" style="left:663px;top:564.2px;width:369.5px;height:241.5px;background:#fff;"></div>
<span class="t" style="left:673.2px;top:573.53px;font-size:10.6px;color:#2e2e2e;transform:scaleX(0.9514);">Результаты проведённых исследований на covid в динамике</span>
<svg class="r" style="left:962.6px;top:576.6px;" width="6" height="6" viewBox="0 0 6 6"><path d="M3 0.5 L3.75 2.2 L5.6 2.35 L4.2 3.6 L4.6 5.4 L3 4.45 L1.4 5.4 L1.8 3.6 L0.4 2.35 L2.25 2.2 Z" fill="none" stroke="#1fa698" stroke-width="0.7" stroke-linejoin="round"/></svg>
<svg class="r" style="left:971.2px;top:576.6px;" width="6.4" height="6" viewBox="0 0 6.4 6"><path d="M4.7 3.3 V5.4 H0.6 V1.5 H3.2" fill="none" stroke="#1fa698" stroke-width="0.8"/><path d="M2.5 4.2 L2.8 3.2 L5.2 0.8 L5.9 1.5 L3.5 3.9 Z" fill="#1fa698"/></svg>
<div class="r" style="left:793px;top:593px;width:22.8px;height:6.6px;background:#b3b3b3;border-radius:1px;"></div>
<span class="t" style="left:795.15px;top:594.48px;font-size:4.4px;font-weight:700;color:#fff;transform:scaleX(1.0111);">54 строк</span>
<div class="r" style="left:818px;top:593px;width:28px;height:6.6px;background:#41b851;border-radius:1px;"></div>
<span class="t" style="left:820.25px;top:594.48px;font-size:4.4px;font-weight:700;color:#fff;transform:scaleX(0.9903);">00:00:03.04</span>
<div class="r" style="left:848px;top:588px;width:178.5px;height:12.6px;background:#fff;border:0.8px solid #d6d6d6;border-radius:2px;"></div>
<div class="r" style="left:862px;top:588px;width:0.8px;height:12.6px;background:#d0d0d0;"></div>
<div class="r" style="left:877.5px;top:588px;width:0.8px;height:12.6px;background:#d0d0d0;"></div>
<div class="r" style="left:903px;top:588px;width:0.8px;height:12.6px;background:#d0d0d0;"></div>
<div class="r" style="left:925.5px;top:588px;width:0.8px;height:12.6px;background:#d0d0d0;"></div>
<div class="r" style="left:949.5px;top:588px;width:0.8px;height:12.6px;background:#d0d0d0;"></div>
<div class="r" style="left:972.5px;top:588px;width:0.8px;height:12.6px;background:#d0d0d0;"></div>
<svg class="r" style="left:852.4px;top:591.6px;" width="5.4" height="5.4" viewBox="0 0 5.4 5.4"><circle cx="1.6" cy="1.6" r="1.1" fill="none" stroke="#444" stroke-width="0.8"/><circle cx="3.8" cy="3.8" r="1.1" fill="none" stroke="#444" stroke-width="0.8"/><path d="M2.2 2.2 L3.2 3.2" stroke="#444" stroke-width="0.8"/></svg>
<span class="t" style="left:866.4px;top:592.51px;font-size:4.6px;color:#777;transform:scaleX(0.9322);">&lt;/&gt;</span>
<svg class="r" style="left:882px;top:591.4px;" width="4.2" height="5.6" viewBox="0 0 4.2 5.6"><path d="M0.4 0.3 h2.2 l1.2 1.2 v3.6 h-3.4z" fill="none" stroke="#808080" stroke-width="0.6"/><path d="M1.1 3 h2 M1.1 4 h2" stroke="#808080" stroke-width="0.4"/></svg>
<span class="t" style="left:888.5px;top:591.52px;font-size:6px;color:#777;transform:scaleX(0.8285);">.json</span>
<svg class="r" style="left:907.5px;top:591.4px;" width="4.2" height="5.6" viewBox="0 0 4.2 5.6"><path d="M0.4 0.3 h2.2 l1.2 1.2 v3.6 h-3.4z" fill="none" stroke="#808080" stroke-width="0.6"/><path d="M1.1 3 h2 M1.1 4 h2" stroke="#808080" stroke-width="0.4"/></svg>
<span class="t" style="left:913.5px;top:591.52px;font-size:6px;color:#777;transform:scaleX(0.8333);">.xls</span>
<svg class="r" style="left:930px;top:591.4px;" width="4.2" height="5.6" viewBox="0 0 4.2 5.6"><path d="M0.4 0.3 h2.2 l1.2 1.2 v3.6 h-3.4z" fill="none" stroke="#808080" stroke-width="0.6"/><path d="M1.1 3 h2 M1.1 4 h2" stroke="#808080" stroke-width="0.4"/></svg>
<span class="t" style="left:936px;top:591.52px;font-size:6px;color:#777;transform:scaleX(0.8437);">.csv</span>
<svg class="r" style="left:954px;top:591.4px;" width="4.2" height="5.6" viewBox="0 0 4.2 5.6"><path d="M0.4 0.3 h2.2 l1.2 1.2 v3.6 h-3.4z" fill="none" stroke="#808080" stroke-width="0.6"/><path d="M1.1 3 h2 M1.1 4 h2" stroke="#808080" stroke-width="0.4"/></svg>
<span class="t" style="left:960px;top:591.52px;font-size:6px;color:#777;transform:scaleX(0.7994);">.pdf</span>
<span class="t" style="left:977px;top:591.52px;font-size:6px;color:#777;transform:scaleX(0.8371);">Посмотреть запрос</span>
<svg class="r" style="left:0;top:0" width="1217" height="834"><path d="M706.3 786.3 H1004.6" stroke="#333" stroke-width="0.5"/><path d="M706.3 772.59 H1004.6" stroke="#e6e6e6" stroke-width="0.5"/><path d="M706.3 758.88 H1004.6" stroke="#e6e6e6" stroke-width="0.5"/><path d="M706.3 745.17 H1004.6" stroke="#e6e6e6" stroke-width="0.5"/><path d="M706.3 731.46 H1004.6" stroke="#e6e6e6" stroke-width="0.5"/><path d="M706.3 717.75 H1004.6" stroke="#e6e6e6" stroke-width="0.5"/><path d="M706.3 704.04 H1004.6" stroke="#e6e6e6" stroke-width="0.5"/><path d="M706.3 690.32 H1004.6" stroke="#e6e6e6" stroke-width="0.5"/><path d="M706.3 676.61 H1004.6" stroke="#e6e6e6" stroke-width="0.5"/><path d="M706.3 662.9 H1004.6" stroke="#e6e6e6" stroke-width="0.5"/><path d="M706.3 649.19 H1004.6" stroke="#e6e6e6" stroke-width="0.5"/><path d="M706.3 635.48 H1004.6" stroke="#e6e6e6" stroke-width="0.5"/><path d="M706.3 620.4 H1004.6" stroke="#e6e6e6" stroke-width="0.5"/><path d="M747.5 620.4 V786.3" stroke="#e6e6e6" stroke-width="0.5"/><path d="M797.1 620.4 V786.3" stroke="#e6e6e6" stroke-width="0.5"/><path d="M846.8 620.4 V786.3" stroke="#e6e6e6" stroke-width="0.5"/><path d="M896.3 620.4 V786.3" stroke="#e6e6e6" stroke-width="0.5"/><path d="M946.1 620.4 V786.3" stroke="#e6e6e6" stroke-width="0.5"/><path d="M995.8 620.4 V786.3" stroke="#e6e6e6" stroke-width="0.5"/><path d="M706.3 619.9 V786.3" stroke="#333" stroke-width="0.6"/><rect x="707" y="725.97" width="15" height="60.33" fill="#668fdb"/><rect x="707" y="712.26" width="15" height="13.71" fill="#e6694a"/><rect x="707" y="710.34" width="15" height="1.92" fill="#fbb543"/><rect x="723.55" y="740.64" width="15" height="45.66" fill="#668fdb"/><rect x="723.55" y="734.75" width="15" height="5.9" fill="#e6694a"/><rect x="723.55" y="733.65" width="15" height="1.1" fill="#fbb543"/><rect x="740.1" y="734.2" width="15" height="52.1" fill="#668fdb"/><rect x="740.1" y="728.17" width="15" height="6.03" fill="#e6694a"/><rect x="740.1" y="727.34" width="15" height="0.82" fill="#fbb543"/><rect x="756.65" y="736.26" width="15" height="50.04" fill="#668fdb"/><rect x="756.65" y="730.22" width="15" height="6.03" fill="#e6694a"/><rect x="756.65" y="729.26" width="15" height="0.96" fill="#fbb543"/><rect x="773.2" y="734.75" width="15" height="51.55" fill="#668fdb"/><rect x="773.2" y="727.21" width="15" height="7.54" fill="#e6694a"/><rect x="773.2" y="723.78" width="15" height="3.43" fill="#fbb543"/><rect x="789.75" y="717.06" width="15" height="69.24" fill="#668fdb"/><rect x="789.75" y="688.27" width="15" height="28.79" fill="#e6694a"/><rect x="789.75" y="684.43" width="15" height="3.84" fill="#fbb543"/><rect x="806.3" y="705.27" width="15" height="81.03" fill="#668fdb"/><rect x="806.3" y="682.37" width="15" height="22.9" fill="#e6694a"/><rect x="806.3" y="675.24" width="15" height="7.13" fill="#fbb543"/><rect x="822.85" y="720.76" width="15" height="65.54" fill="#668fdb"/><rect x="822.85" y="710.21" width="15" height="10.56" fill="#e6694a"/><rect x="822.85" y="707.87" width="15" height="2.33" fill="#fbb543"/><rect x="839.4" y="713.22" width="15" height="73.08" fill="#668fdb"/><rect x="839.4" y="701.02" width="15" height="12.2" fill="#e6694a"/><rect x="839.4" y="699.79" width="15" height="1.23" fill="#fbb543"/><rect x="855.95" y="706.09" width="15" height="80.21" fill="#668fdb"/><rect x="855.95" y="684.57" width="15" height="21.53" fill="#e6694a"/><rect x="855.95" y="683.06" width="15" height="1.51" fill="#fbb543"/><rect x="872.5" y="707.05" width="15" height="79.25" fill="#668fdb"/><rect x="872.5" y="687.31" width="15" height="19.74" fill="#e6694a"/><rect x="872.5" y="686.21" width="15" height="1.1" fill="#fbb543"/><rect x="889.05" y="695.26" width="15" height="91.04" fill="#668fdb"/><rect x="889.05" y="673.32" width="15" height="21.94" fill="#dc3912"/><rect x="889.05" y="673.05" width="15" height="0.27" fill="#fbb543"/><rect x="905.6" y="712.26" width="15" height="74.04" fill="#668fdb"/><rect x="905.6" y="662.22" width="15" height="50.04" fill="#e6694a"/><rect x="905.6" y="661.67" width="15" height="0.55" fill="#fbb543"/><rect x="922.15" y="699.1" width="15" height="87.2" fill="#668fdb"/><rect x="922.15" y="620.4" width="15" height="78.7" fill="#e6694a"/><rect x="938.7" y="752.71" width="15" height="33.59" fill="#668fdb"/><rect x="938.7" y="745.72" width="15" height="6.99" fill="#e6694a"/><rect x="938.7" y="745.44" width="15" height="0.27" fill="#fbb543"/><rect x="955.25" y="760.25" width="15" height="26.05" fill="#668fdb"/><rect x="955.25" y="757.92" width="15" height="2.33" fill="#e6694a"/><rect x="955.25" y="757.64" width="15" height="0.27" fill="#fbb543"/><rect x="971.8" y="763.27" width="15" height="23.03" fill="#668fdb"/><rect x="971.8" y="762.03" width="15" height="1.23" fill="#e6694a"/><rect x="971.8" y="761.76" width="15" height="0.27" fill="#fbb543"/><rect x="988.35" y="785.45" width="15" height="0.85" fill="#668fdb"/><circle cx="866.6" cy="613.6" r="2.2" fill="#3366cc"/><circle cx="916.6" cy="613.6" r="2.2" fill="#dc3912"/><circle cx="959.6" cy="613.6" r="2.2" fill="#ff9900"/></svg>
<span class="t" style="left:870.8px;top:611px;font-size:5.2px;color:#222;transform:scaleX(0.9638);">Не обнаружено</span>
<span class="t" style="left:920px;top:611px;font-size:5.2px;color:#222;transform:scaleX(0.97);">Обнаружено</span>
<span class="t" style="left:963px;top:611px;font-size:5.2px;color:#222;transform:scaleX(0.9678);">Сомнительно</span>
<span class="t" style="left:685.8px;top:769.92px;font-size:5.4px;color:#222;transform:scaleX(0.9324);">100,000</span>
<span class="t" style="left:685.8px;top:756.21px;font-size:5.4px;color:#222;transform:scaleX(0.9324);">200,000</span>
<span class="t" style="left:685.8px;top:742.5px;font-size:5.4px;color:#222;transform:scaleX(0.9324);">300,000</span>
<span class="t" style="left:685.8px;top:728.79px;font-size:5.4px;color:#222;transform:scaleX(0.9324);">400,000</span>
<span class="t" style="left:685.8px;top:715.08px;font-size:5.4px;color:#222;transform:scaleX(0.9324);">500,000</span>
<span class="t" style="left:685.8px;top:701.36px;font-size:5.4px;color:#222;transform:scaleX(0.9324);">600,000</span>
<span class="t" style="left:685.8px;top:687.65px;font-size:5.4px;color:#222;transform:scaleX(0.9324);">700,000</span>
<span class="t" style="left:685.8px;top:673.94px;font-size:5.4px;color:#222;transform:scaleX(0.9324);">800,000</span>
<span class="t" style="left:685.8px;top:660.23px;font-size:5.4px;color:#222;transform:scaleX(0.9324);">900,000</span>
<span class="t" style="left:681.4px;top:646.52px;font-size:5.4px;color:#222;transform:scaleX(0.9407);">1,000,000</span>
<span class="t" style="left:681.4px;top:632.81px;font-size:5.4px;color:#222;transform:scaleX(0.9407);">1,100,000</span>
<span class="t" style="left:681.4px;top:617.73px;font-size:5.4px;font-weight:700;color:#222;transform:scaleX(0.9407);">1,210,000</span>
<span class="t" style="left:694.2px;top:783.63px;font-size:5.4px;color:#222;transform:scaleX(0.9324);">0.00</span>
<span class="t" style="left:705.2px;top:704.17px;font-size:5.4px;color:#222;transform:scaleX(0.9529);">554,000</span>
<span class="t" style="left:721.75px;top:727.48px;font-size:5.4px;color:#222;transform:scaleX(0.9529);">384,000</span>
<span class="t" style="left:738.3px;top:721.17px;font-size:5.4px;color:#222;transform:scaleX(0.9529);">430,000</span>
<span class="t" style="left:754.85px;top:723.09px;font-size:5.4px;color:#222;transform:scaleX(0.9529);">416,000</span>
<span class="t" style="left:771.4px;top:717.61px;font-size:5.4px;color:#222;transform:scaleX(0.9529);">456,000</span>
<span class="t" style="left:787.95px;top:678.26px;font-size:5.4px;color:#222;transform:scaleX(0.9529);">743,000</span>
<span class="t" style="left:804.5px;top:669.07px;font-size:5.4px;color:#222;transform:scaleX(0.9529);">810,000</span>
<span class="t" style="left:821.05px;top:701.7px;font-size:5.4px;color:#222;transform:scaleX(0.9529);">572,000</span>
<span class="t" style="left:837.6px;top:693.61px;font-size:5.4px;color:#222;transform:scaleX(0.9529);">631,000</span>
<span class="t" style="left:854.15px;top:676.89px;font-size:5.4px;color:#222;transform:scaleX(0.9529);">753,000</span>
<span class="t" style="left:870.7px;top:680.04px;font-size:5.4px;color:#222;transform:scaleX(0.9529);">730,000</span>
<span class="t" style="left:887.25px;top:666.88px;font-size:5.4px;color:#222;transform:scaleX(0.9529);">826,000</span>
<span class="t" style="left:903.8px;top:655.5px;font-size:5.4px;color:#222;transform:scaleX(0.9529);">909,000</span>
<span class="t" style="left:918.15px;top:614.23px;font-size:5.4px;color:#222;transform:scaleX(0.9574);">1,210,000</span>
<span class="t" style="left:936.9px;top:739.27px;font-size:5.4px;color:#222;transform:scaleX(0.9529);">298,000</span>
<span class="t" style="left:953.45px;top:751.47px;font-size:5.4px;color:#222;transform:scaleX(0.9529);">209,000</span>
<span class="t" style="left:970px;top:755.59px;font-size:5.4px;color:#222;transform:scaleX(0.9529);">179,000</span>
<span class="t" style="left:989.55px;top:779.28px;font-size:5.4px;color:#222;transform:scaleX(0.9324);">6,220</span>
<span class="t" style="left:698px;top:788.63px;font-size:5.4px;font-weight:700;color:#222;transform:scaleX(0.9279);">Январь, 2021</span>
<span class="t" style="left:784.1px;top:788.63px;font-size:5.4px;color:#222;transform:scaleX(0.9046);">Июнь, 2021</span>
<span class="t" style="left:828.7px;top:788.63px;font-size:5.4px;color:#222;transform:scaleX(0.9233);">Сентябрь, 2021</span>
<span class="t" style="left:879.55px;top:788.63px;font-size:5.4px;color:#222;transform:scaleX(0.9288);">Декабрь, 2021</span>
<span class="t" style="left:933.35px;top:788.63px;font-size:5.4px;color:#222;transform:scaleX(0.9328);">Март, 2022</span>
<span class="t" style="left:981.8px;top:788.63px;font-size:5.4px;font-weight:700;color:#222;transform:scaleX(0.9206);">Июнь, 2022</span>
<div class="r" style="left:908.8px;top:679.4px;width:65.8px;height:19px;background:rgba(255,255,255,.93);border:0.7px solid #c4c4c4;border-radius:1.2px;box-shadow:0.5px 0.5px 1.5px rgba(0,0,0,.2);"></div>
<span class="t" style="left:911.3px;top:683px;font-size:5.2px;font-weight:700;color:#222;transform:scaleX(0.8758);">Декабрь, 2021</span>
<div class="r" style="left:911.8px;top:690.5px;width:4.5px;height:4.5px;background:#dc3912;"></div>
<span class="t" style="left:920.5px;top:690.2px;font-size:5.2px;color:#222;transform:scaleX(0.8713);">Обнаружено</span>
<span class="t" style="left:951.3px;top:690.2px;font-size:5.2px;font-weight:700;color:#222;transform:scaleX(0.8884);">154,000</span>
</section>
<ul class="dd">
<div class="r" style="left:286.5px;top:57.5px;width:168.7px;height:165.7px;background:#fff;border:1px solid #d9d9d9;border-top:none;box-shadow:0 2px 5px rgba(0,0,0,.28);"></div>
<svg class="r" style="left:300px;top:64.5px;" width="8.4" height="8.6" viewBox="0 0 8.4 8.6"><g transform="translate(0.6,0)"><ellipse cx="3.6" cy="1.6" rx="3.5" ry="1.5" fill="#333"/><path d="M0.1 2.5 v1.5 a3.5 1.5 0 0 0 7 0 v-1.5 a3.5 1.3 0 0 1 -7 0z M0.1 4.9 v1.7 a3.5 1.5 0 0 0 7 0 v-1.7 a3.5 1.3 0 0 1 -7 0z" fill="#333"/></g></svg>
<span class="t" style="left:314.2px;top:64.17px;font-size:9.6px;color:#5a5a5a;transform:scaleX(0.875);">Базы данных</span>
<div class="r" style="left:287.5px;top:81.5px;width:166.7px;height:0.9px;background:#e6e6e6;"></div>
<svg class="r" style="left:300px;top:91.2px;" width="8.4" height="8.6" viewBox="0 0 8.4 8.6"><path d="M4.2 0.4 L7 3.4 H5.3 V5.6 H3.1 V3.4 H1.4 Z" fill="#333"/><path d="M0.4 5.4 V7.9 H8 V5.4 H6.2 V6.3 H2.2 V5.4z" fill="#333"/></svg>
<span class="t" style="left:314.2px;top:90.87px;font-size:9.6px;color:#5a5a5a;transform:scaleX(0.8726);">Загрузить CSV</span>
<div class="r" style="left:287.5px;top:108.5px;width:166.7px;height:0.9px;background:#e6e6e6;"></div>
<svg class="r" style="left:300px;top:118.5px;" width="8.4" height="8.6" viewBox="0 0 8.4 8.6"><rect x="0.8" y="1.2" width="6.8" height="6" fill="none" stroke="#444" stroke-width="0.9"/><path d="M4.2 1.2 v6" stroke="#444" stroke-width="0.8"/></svg>
<span class="t" style="left:314.2px;top:118.17px;font-size:9.6px;color:#5a5a5a;transform:scaleX(0.8758);">Группы показателей</span>
<svg class="r" style="left:300px;top:133.7px;" width="8.4" height="8.6" viewBox="0 0 8.4 8.6"><rect x="0.6" y="1.2" width="7.2" height="6" fill="none" stroke="#444" stroke-width="0.9"/><path d="M0.6 3.2 h7.2 M0.6 5.2 h7.2 M3 1.2 v6 M5.4 1.2 v6" stroke="#444" stroke-width="0.7"/></svg>
<span class="t" style="left:314.2px;top:133.37px;font-size:9.6px;color:#5a5a5a;transform:scaleX(0.8652);">Витрины</span>
<div class="r" style="left:287.5px;top:151px;width:166.7px;height:0.9px;background:#e6e6e6;"></div>
<svg class="r" style="left:300px;top:161px;" width="8.4" height="8.6" viewBox="0 0 8.4 8.6"><path d="M4.2 0.3 L6.6 1.5 V4 L4.2 5.2 L1.8 4 V1.5Z M2 3.6 L4.2 4.8 V7.4 L2 8.4 L-0.2 7.3 V4.7Z M6.4 3.6 L8.6 4.7 V7.3 L6.4 8.4 L4.2 7.4 V4.8Z" fill="#333" stroke="#fff" stroke-width="0.45"/></svg>
<span class="t" style="left:314.2px;top:160.67px;font-size:9.6px;color:#5a5a5a;transform:scaleX(0.8706);">Список кластеров Druid</span>
<svg class="r" style="left:300px;top:176.5px;" width="8.4" height="8.6" viewBox="0 0 8.4 8.6"><path d="M4.2 0.4 L7.8 2 V6.4 L4.2 8.2 L0.6 6.4 V2 Z" fill="#333"/><path d="M0.9 2.2 L4.2 3.8 L7.5 2.2 M4.2 3.8 V8" stroke="#fff" stroke-width="0.6" fill="none"/></svg>
<span class="t" style="left:314.2px;top:176.17px;font-size:9.6px;color:#5a5a5a;transform:scaleX(0.8714);">Источники данных Druid</span>
<svg class="r" style="left:300px;top:192.5px;" width="8.4" height="8.6" viewBox="0 0 8.4 8.6"><path d="M1.2 3.6 A3.1 3.1 0 0 1 6.6 2.2 M7.2 5 A3.1 3.1 0 0 1 1.8 6.4" fill="none" stroke="#333" stroke-width="1.3"/><path d="M7.6 0.6 V3.4 H4.8z M0.8 8 V5.2 H3.6z" fill="#333"/></svg>
<span class="t" style="left:314.2px;top:192.17px;font-size:9.6px;color:#5a5a5a;transform:scaleX(0.8754);">Сканирование новых источников</span>
<svg class="r" style="left:300px;top:208px;" width="8.4" height="8.6" viewBox="0 0 8.4 8.6"><circle cx="4.2" cy="4.3" r="2.4" fill="none" stroke="#333" stroke-width="1.9"/><path d="M4.2 0.4 V8.2 M0.3 4.3 H8.1 M1.4 1.5 L7 7.1 M7 1.5 L1.4 7.1" stroke="#333" stroke-width="1.1"/><circle cx="4.2" cy="4.3" r="1.1" fill="#fff"/></svg>
<span class="t" style="left:314.2px;top:207.67px;font-size:9.6px;color:#5a5a5a;transform:scaleX(0.874);">Обновить метаданные Druid</span>
</ul>
</body></html>
